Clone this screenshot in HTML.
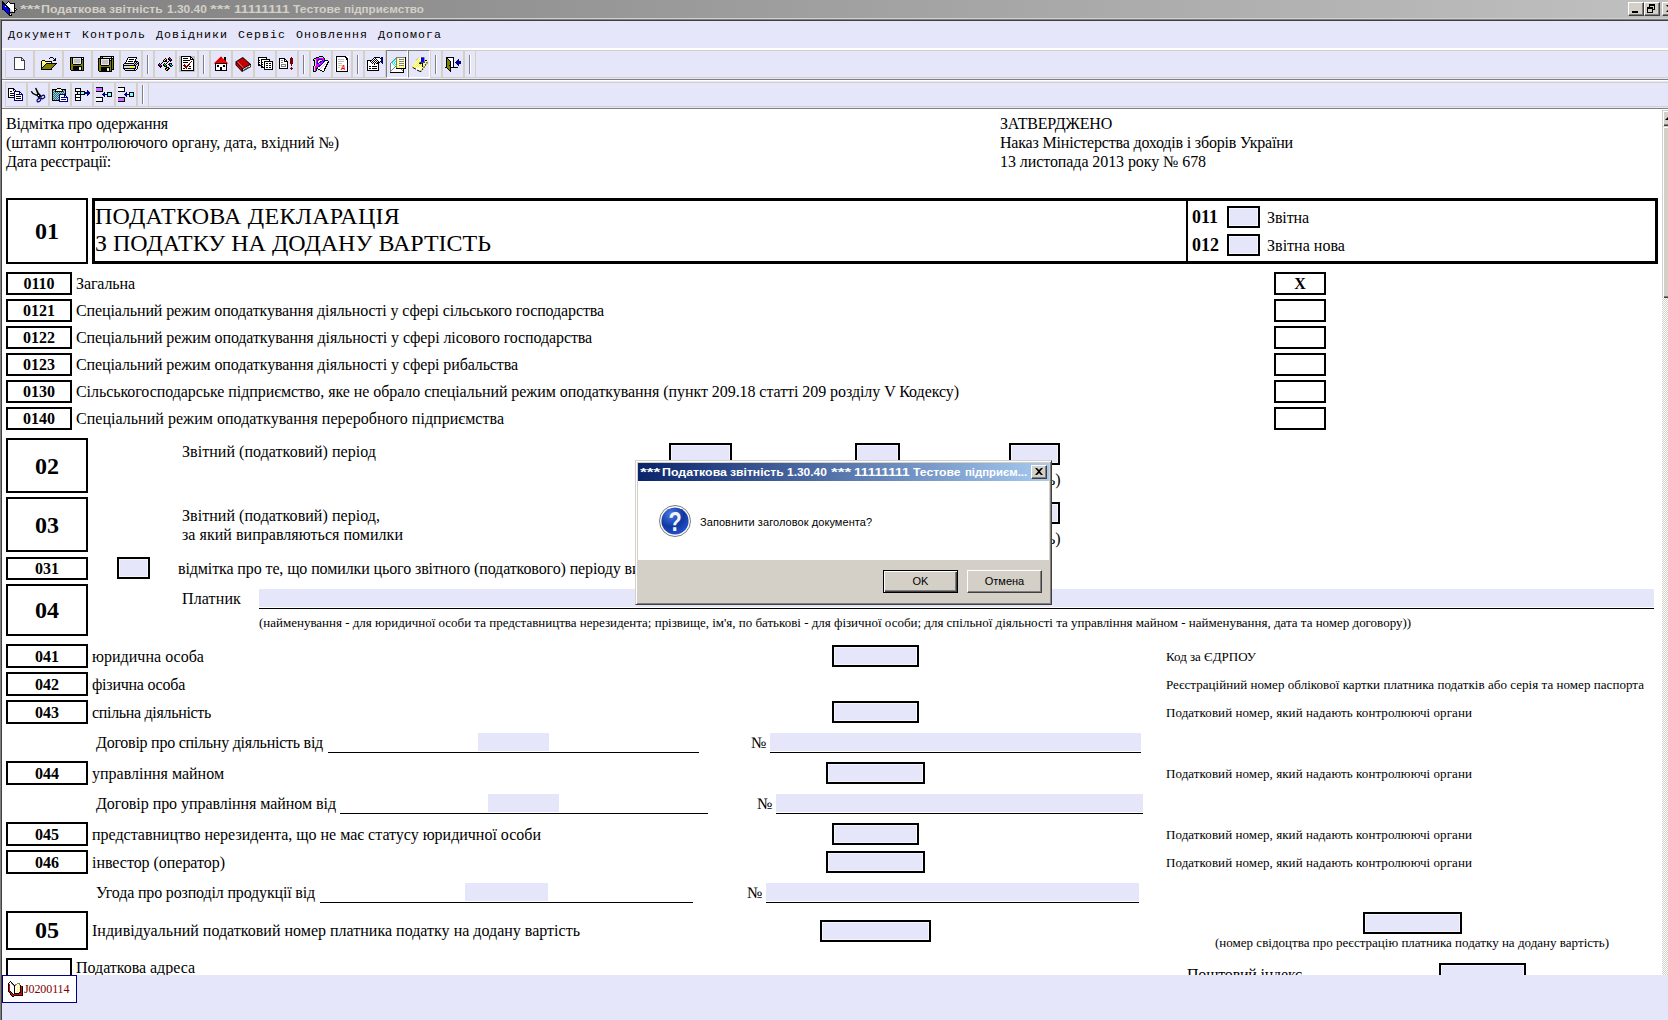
<!DOCTYPE html>
<html lang="uk"><head><meta charset="utf-8"><title>Податкова звітність</title>
<style>
html,body{margin:0;padding:0}
body{width:1668px;height:1020px;position:relative;overflow:hidden;background:#e6e6fa;font-family:"Liberation Sans",sans-serif}
#doc{position:absolute;left:0;top:0;width:1662px;height:975px;overflow:hidden;background:#fff}
#chrome{position:absolute;left:0;top:0;width:1668px;height:110px;background:#e6e6fa}
.abs{position:absolute}
</style></head><body>
<div id="doc">
<div style='position:absolute;left:6px;top:113.6px;font:400 16px/20px "Liberation Serif", serif;color:#000;white-space:pre;letter-spacing:-0.156px;'>Відмітка про одержання</div>
<div style='position:absolute;left:6px;top:132.6px;font:400 16px/20px "Liberation Serif", serif;color:#000;white-space:pre;letter-spacing:-0.04px;'>(штамп контролюючого органу, дата, вхідний №)</div>
<div style='position:absolute;left:6px;top:151.6px;font:400 16px/20px "Liberation Serif", serif;color:#000;white-space:pre;letter-spacing:-0.26px;'>Дата реєстрації:</div>
<div style='position:absolute;left:1000px;top:113.6px;font:400 16px/20px "Liberation Serif", serif;color:#000;white-space:pre;letter-spacing:-0.202px;'>ЗАТВЕРДЖЕНО</div>
<div style='position:absolute;left:1000px;top:132.6px;font:400 16px/20px "Liberation Serif", serif;color:#000;white-space:pre;letter-spacing:-0.189px;'>Наказ Міністерства доходів і зборів України</div>
<div style='position:absolute;left:1000px;top:151.6px;font:400 16px/20px "Liberation Serif", serif;color:#000;white-space:pre;letter-spacing:-0.077px;'>13 листопада 2013 року № 678</div>
<div style="position:absolute;left:6px;top:198px;width:82px;height:66px;box-sizing:border-box;border:2px solid #000;background:#fff;"></div>
<div style='position:absolute;left:6px;top:217.4px;font:700 24px/29px "Liberation Serif", serif;color:#000;white-space:pre;width:82px;text-align:center;'>01</div>
<div style="position:absolute;left:92px;top:198px;width:1566px;height:66px;box-sizing:border-box;border:3px solid #000;background:#fff;"></div>
<div style="position:absolute;left:1186px;top:200px;width:2px;height:62px;background:#000;"></div>
<div style='position:absolute;left:95px;top:202.4px;font:400 24px/29px "Liberation Serif", serif;color:#000;white-space:pre;letter-spacing:0.255px;'>ПОДАТКОВА ДЕКЛАРАЦІЯ</div>
<div style='position:absolute;left:95px;top:229.4px;font:400 24px/29px "Liberation Serif", serif;color:#000;white-space:pre;letter-spacing:-0.002px;'>З ПОДАТКУ НА ДОДАНУ ВАРТІСТЬ</div>
<div style='position:absolute;left:1192px;top:205.93px;font:700 18px/22px "Liberation Serif", serif;color:#000;white-space:pre;'>011</div>
<div style='position:absolute;left:1192px;top:233.93px;font:700 18px/22px "Liberation Serif", serif;color:#000;white-space:pre;'>012</div>
<div style="position:absolute;left:1227px;top:206px;width:33px;height:22px;box-sizing:border-box;border:2px solid #000;background:#e6e6fa;box-shadow:inset 0 0 0 1px #f4f4fd;"></div>
<div style="position:absolute;left:1227px;top:234px;width:33px;height:22px;box-sizing:border-box;border:2px solid #000;background:#e6e6fa;box-shadow:inset 0 0 0 1px #f4f4fd;"></div>
<div style='position:absolute;left:1267px;top:207.6px;font:400 16px/20px "Liberation Serif", serif;color:#000;white-space:pre;letter-spacing:-0.112px;'>Звітна</div>
<div style='position:absolute;left:1267px;top:235.6px;font:400 16px/20px "Liberation Serif", serif;color:#000;white-space:pre;letter-spacing:0.028px;'>Звітна нова</div>
<div style="position:absolute;left:6px;top:272px;width:66px;height:23px;box-sizing:border-box;border:2px solid #000;background:#fff;"></div>
<div style='position:absolute;left:6px;top:273.6px;font:700 16px/20px "Liberation Serif", serif;color:#000;white-space:pre;width:66px;text-align:center;'>0110</div>
<div style='position:absolute;left:76px;top:273.6px;font:400 16px/20px "Liberation Serif", serif;color:#000;white-space:pre;letter-spacing:-0.109px;'>Загальна</div>
<div style="position:absolute;left:1274px;top:272px;width:52px;height:23px;box-sizing:border-box;border:2px solid #000;background:#fff;"></div>
<div style="position:absolute;left:6px;top:299px;width:66px;height:23px;box-sizing:border-box;border:2px solid #000;background:#fff;"></div>
<div style='position:absolute;left:6px;top:300.6px;font:700 16px/20px "Liberation Serif", serif;color:#000;white-space:pre;width:66px;text-align:center;'>0121</div>
<div style='position:absolute;left:76px;top:300.6px;font:400 16px/20px "Liberation Serif", serif;color:#000;white-space:pre;letter-spacing:-0.117px;'>Спеціальний режим оподаткування діяльності у сфері сільського господарства</div>
<div style="position:absolute;left:1274px;top:299px;width:52px;height:23px;box-sizing:border-box;border:2px solid #000;background:#fff;"></div>
<div style="position:absolute;left:6px;top:326px;width:66px;height:23px;box-sizing:border-box;border:2px solid #000;background:#fff;"></div>
<div style='position:absolute;left:6px;top:327.6px;font:700 16px/20px "Liberation Serif", serif;color:#000;white-space:pre;width:66px;text-align:center;'>0122</div>
<div style='position:absolute;left:76px;top:327.6px;font:400 16px/20px "Liberation Serif", serif;color:#000;white-space:pre;letter-spacing:-0.103px;'>Спеціальний режим оподаткування діяльності у сфері лісового господарства</div>
<div style="position:absolute;left:1274px;top:326px;width:52px;height:23px;box-sizing:border-box;border:2px solid #000;background:#fff;"></div>
<div style="position:absolute;left:6px;top:353px;width:66px;height:23px;box-sizing:border-box;border:2px solid #000;background:#fff;"></div>
<div style='position:absolute;left:6px;top:354.6px;font:700 16px/20px "Liberation Serif", serif;color:#000;white-space:pre;width:66px;text-align:center;'>0123</div>
<div style='position:absolute;left:76px;top:354.6px;font:400 16px/20px "Liberation Serif", serif;color:#000;white-space:pre;letter-spacing:-0.107px;'>Спеціальний режим оподаткування діяльності у сфері рибальства</div>
<div style="position:absolute;left:1274px;top:353px;width:52px;height:23px;box-sizing:border-box;border:2px solid #000;background:#fff;"></div>
<div style="position:absolute;left:6px;top:380px;width:66px;height:23px;box-sizing:border-box;border:2px solid #000;background:#fff;"></div>
<div style='position:absolute;left:6px;top:381.6px;font:700 16px/20px "Liberation Serif", serif;color:#000;white-space:pre;width:66px;text-align:center;'>0130</div>
<div style='position:absolute;left:76px;top:381.6px;font:400 16px/20px "Liberation Serif", serif;color:#000;white-space:pre;letter-spacing:-0.065px;'>Сільськогосподарське підприємство, яке не обрало спеціальний режим оподаткування (пункт 209.18 статті 209 розділу V Кодексу)</div>
<div style="position:absolute;left:1274px;top:380px;width:52px;height:23px;box-sizing:border-box;border:2px solid #000;background:#fff;"></div>
<div style="position:absolute;left:6px;top:407px;width:66px;height:23px;box-sizing:border-box;border:2px solid #000;background:#fff;"></div>
<div style='position:absolute;left:6px;top:408.6px;font:700 16px/20px "Liberation Serif", serif;color:#000;white-space:pre;width:66px;text-align:center;'>0140</div>
<div style='position:absolute;left:76px;top:408.6px;font:400 16px/20px "Liberation Serif", serif;color:#000;white-space:pre;letter-spacing:0.032px;'>Спеціальний режим оподаткування переробного підприємства</div>
<div style="position:absolute;left:1274px;top:407px;width:52px;height:23px;box-sizing:border-box;border:2px solid #000;background:#fff;"></div>
<div style='position:absolute;left:1274px;top:273.6px;font:700 16px/20px "Liberation Serif", serif;color:#000;white-space:pre;width:52px;text-align:center;'>X</div>
<div style="position:absolute;left:6px;top:438px;width:82px;height:55px;box-sizing:border-box;border:2px solid #000;background:#fff;"></div>
<div style='position:absolute;left:6px;top:452.4px;font:700 24px/29px "Liberation Serif", serif;color:#000;white-space:pre;width:82px;text-align:center;'>02</div>
<div style='position:absolute;left:182px;top:441.6px;font:400 16px/20px "Liberation Serif", serif;color:#000;white-space:pre;letter-spacing:0.048px;'>Звітний (податковий) період</div>
<div style="position:absolute;left:669px;top:443px;width:63px;height:22px;box-sizing:border-box;border:2px solid #000;background:#e6e6fa;box-shadow:inset 0 0 0 1px #f4f4fd;"></div>
<div style="position:absolute;left:855px;top:443px;width:45px;height:22px;box-sizing:border-box;border:2px solid #000;background:#e6e6fa;box-shadow:inset 0 0 0 1px #f4f4fd;"></div>
<div style="position:absolute;left:1009px;top:443px;width:51px;height:22px;box-sizing:border-box;border:2px solid #000;background:#e6e6fa;box-shadow:inset 0 0 0 1px #f4f4fd;"></div>
<div style='position:absolute;left:1048px;top:469.6px;font:400 16px/20px "Liberation Serif", serif;color:#000;white-space:pre;'>ь)</div>
<div style="position:absolute;left:6px;top:497px;width:82px;height:55px;box-sizing:border-box;border:2px solid #000;background:#fff;"></div>
<div style='position:absolute;left:6px;top:511.4px;font:700 24px/29px "Liberation Serif", serif;color:#000;white-space:pre;width:82px;text-align:center;'>03</div>
<div style='position:absolute;left:182px;top:505.6px;font:400 16px/20px "Liberation Serif", serif;color:#000;white-space:pre;letter-spacing:0.046px;'>Звітний (податковий) період,</div>
<div style='position:absolute;left:182px;top:524.6px;font:400 16px/20px "Liberation Serif", serif;color:#000;white-space:pre;letter-spacing:0.038px;'>за який виправляються помилки</div>
<div style="position:absolute;left:1030px;top:502px;width:30px;height:22px;box-sizing:border-box;border:2px solid #000;background:#e6e6fa;box-shadow:inset 0 0 0 1px #f4f4fd;"></div>
<div style='position:absolute;left:1048px;top:528.6px;font:400 16px/20px "Liberation Serif", serif;color:#000;white-space:pre;'>ь)</div>
<div style="position:absolute;left:6px;top:557px;width:82px;height:23px;box-sizing:border-box;border:2px solid #000;background:#fff;"></div>
<div style='position:absolute;left:6px;top:558.6px;font:700 16px/20px "Liberation Serif", serif;color:#000;white-space:pre;width:82px;text-align:center;'>031</div>
<div style="position:absolute;left:117px;top:557px;width:33px;height:22px;box-sizing:border-box;border:2px solid #000;background:#e6e6fa;box-shadow:inset 0 0 0 1px #f4f4fd;"></div>
<div style='position:absolute;left:178px;top:558.6px;font:400 16px/20px "Liberation Serif", serif;color:#000;white-space:pre;letter-spacing:-0.108px;'>відмітка про те, що помилки цього звітного (податкового) періоду виправлено</div>
<div style="position:absolute;left:6px;top:584px;width:82px;height:52px;box-sizing:border-box;border:2px solid #000;background:#fff;"></div>
<div style='position:absolute;left:6px;top:596.4px;font:700 24px/29px "Liberation Serif", serif;color:#000;white-space:pre;width:82px;text-align:center;'>04</div>
<div style='position:absolute;left:182px;top:588.6px;font:400 16px/20px "Liberation Serif", serif;color:#000;white-space:pre;letter-spacing:0.125px;'>Платник</div>
<div style="position:absolute;left:259px;top:589px;width:1395px;height:18px;background:#e6e6fa;"></div>
<div style="position:absolute;left:259px;top:608px;width:1395px;height:1px;background:#000;"></div>
<div style='position:absolute;left:259px;top:614.61px;font:400 13px/16px "Liberation Serif", serif;color:#000;white-space:pre;letter-spacing:-0.011px;'>(найменування - для юридичної особи та представництва нерезидента; прізвище, ім'я, по батькові - для фізичної особи; для спільної діяльності та управління майном - найменування, дата та номер договору))</div>
<div style="position:absolute;left:6px;top:644px;width:82px;height:24px;box-sizing:border-box;border:2px solid #000;background:#fff;"></div>
<div style='position:absolute;left:6px;top:646.6px;font:700 16px/20px "Liberation Serif", serif;color:#000;white-space:pre;width:82px;text-align:center;'>041</div>
<div style='position:absolute;left:92px;top:646.6px;font:400 16px/20px "Liberation Serif", serif;color:#000;white-space:pre;letter-spacing:0.023px;'>юридична особа</div>
<div style="position:absolute;left:832px;top:645px;width:87px;height:22px;box-sizing:border-box;border:2px solid #000;background:#e6e6fa;box-shadow:inset 0 0 0 1px #f4f4fd;"></div>
<div style='position:absolute;left:1166px;top:648.61px;font:400 13px/16px "Liberation Serif", serif;color:#000;white-space:pre;letter-spacing:-0.008px;'>Код за ЄДРПОУ</div>
<div style="position:absolute;left:6px;top:672px;width:82px;height:24px;box-sizing:border-box;border:2px solid #000;background:#fff;"></div>
<div style='position:absolute;left:6px;top:674.6px;font:700 16px/20px "Liberation Serif", serif;color:#000;white-space:pre;width:82px;text-align:center;'>042</div>
<div style='position:absolute;left:92px;top:674.6px;font:400 16px/20px "Liberation Serif", serif;color:#000;white-space:pre;letter-spacing:-0.243px;'>фізична особа</div>
<div style='position:absolute;left:1166px;top:676.61px;font:400 13px/16px "Liberation Serif", serif;color:#000;white-space:pre;letter-spacing:0.044px;'>Реєстраційний номер облікової картки платника податків або серія та номер паспорта</div>
<div style="position:absolute;left:6px;top:700px;width:82px;height:24px;box-sizing:border-box;border:2px solid #000;background:#fff;"></div>
<div style='position:absolute;left:6px;top:702.6px;font:700 16px/20px "Liberation Serif", serif;color:#000;white-space:pre;width:82px;text-align:center;'>043</div>
<div style='position:absolute;left:92px;top:702.6px;font:400 16px/20px "Liberation Serif", serif;color:#000;white-space:pre;letter-spacing:-0.316px;'>спільна діяльність</div>
<div style="position:absolute;left:832px;top:701px;width:87px;height:22px;box-sizing:border-box;border:2px solid #000;background:#e6e6fa;box-shadow:inset 0 0 0 1px #f4f4fd;"></div>
<div style='position:absolute;left:1166px;top:704.61px;font:400 13px/16px "Liberation Serif", serif;color:#000;white-space:pre;letter-spacing:0.071px;'>Податковий номер, який надають контролюючі органи</div>
<div style="position:absolute;left:6px;top:761px;width:82px;height:24px;box-sizing:border-box;border:2px solid #000;background:#fff;"></div>
<div style='position:absolute;left:6px;top:763.6px;font:700 16px/20px "Liberation Serif", serif;color:#000;white-space:pre;width:82px;text-align:center;'>044</div>
<div style='position:absolute;left:92px;top:763.6px;font:400 16px/20px "Liberation Serif", serif;color:#000;white-space:pre;letter-spacing:0.001px;'>управління майном</div>
<div style="position:absolute;left:826px;top:762px;width:99px;height:22px;box-sizing:border-box;border:2px solid #000;background:#e6e6fa;box-shadow:inset 0 0 0 1px #f4f4fd;"></div>
<div style='position:absolute;left:1166px;top:765.61px;font:400 13px/16px "Liberation Serif", serif;color:#000;white-space:pre;letter-spacing:0.071px;'>Податковий номер, який надають контролюючі органи</div>
<div style="position:absolute;left:6px;top:822px;width:82px;height:24px;box-sizing:border-box;border:2px solid #000;background:#fff;"></div>
<div style='position:absolute;left:6px;top:824.6px;font:700 16px/20px "Liberation Serif", serif;color:#000;white-space:pre;width:82px;text-align:center;'>045</div>
<div style='position:absolute;left:92px;top:824.6px;font:400 16px/20px "Liberation Serif", serif;color:#000;white-space:pre;letter-spacing:-0.012px;'>представництво нерезидента, що не має статусу юридичної особи</div>
<div style="position:absolute;left:832px;top:823px;width:87px;height:22px;box-sizing:border-box;border:2px solid #000;background:#e6e6fa;box-shadow:inset 0 0 0 1px #f4f4fd;"></div>
<div style='position:absolute;left:1166px;top:826.61px;font:400 13px/16px "Liberation Serif", serif;color:#000;white-space:pre;letter-spacing:0.071px;'>Податковий номер, який надають контролюючі органи</div>
<div style="position:absolute;left:6px;top:850px;width:82px;height:24px;box-sizing:border-box;border:2px solid #000;background:#fff;"></div>
<div style='position:absolute;left:6px;top:852.6px;font:700 16px/20px "Liberation Serif", serif;color:#000;white-space:pre;width:82px;text-align:center;'>046</div>
<div style='position:absolute;left:92px;top:852.6px;font:400 16px/20px "Liberation Serif", serif;color:#000;white-space:pre;letter-spacing:-0.034px;'>інвестор (оператор)</div>
<div style="position:absolute;left:826px;top:851px;width:99px;height:22px;box-sizing:border-box;border:2px solid #000;background:#e6e6fa;box-shadow:inset 0 0 0 1px #f4f4fd;"></div>
<div style='position:absolute;left:1166px;top:854.61px;font:400 13px/16px "Liberation Serif", serif;color:#000;white-space:pre;letter-spacing:0.071px;'>Податковий номер, який надають контролюючі органи</div>
<div style='position:absolute;left:96px;top:732.6px;font:400 16px/20px "Liberation Serif", serif;color:#000;white-space:pre;letter-spacing:-0.246px;'>Договір про спільну діяльність від</div>
<div style="position:absolute;left:328px;top:752px;width:371px;height:1px;background:#000;"></div>
<div style="position:absolute;left:478px;top:733px;width:71px;height:18px;background:#e6e6fa;"></div>
<div style='position:absolute;left:751px;top:732.6px;font:400 16px/20px "Liberation Serif", serif;color:#000;white-space:pre;'>№</div>
<div style="position:absolute;left:770px;top:733px;width:371px;height:18px;background:#e6e6fa;"></div>
<div style="position:absolute;left:770px;top:752px;width:371px;height:1px;background:#000;"></div>
<div style='position:absolute;left:96px;top:793.6px;font:400 16px/20px "Liberation Serif", serif;color:#000;white-space:pre;letter-spacing:-0.054px;'>Договір про управління майном від</div>
<div style="position:absolute;left:340px;top:813px;width:368px;height:1px;background:#000;"></div>
<div style="position:absolute;left:488px;top:794px;width:71px;height:18px;background:#e6e6fa;"></div>
<div style='position:absolute;left:757px;top:793.6px;font:400 16px/20px "Liberation Serif", serif;color:#000;white-space:pre;'>№</div>
<div style="position:absolute;left:776px;top:794px;width:367px;height:18px;background:#e6e6fa;"></div>
<div style="position:absolute;left:776px;top:813px;width:367px;height:1px;background:#000;"></div>
<div style='position:absolute;left:96px;top:882.6px;font:400 16px/20px "Liberation Serif", serif;color:#000;white-space:pre;letter-spacing:-0.157px;'>Угода про розподіл продукції від</div>
<div style="position:absolute;left:320px;top:902px;width:373px;height:1px;background:#000;"></div>
<div style="position:absolute;left:465px;top:883px;width:83px;height:18px;background:#e6e6fa;"></div>
<div style='position:absolute;left:747px;top:882.6px;font:400 16px/20px "Liberation Serif", serif;color:#000;white-space:pre;'>№</div>
<div style="position:absolute;left:766px;top:883px;width:373px;height:18px;background:#e6e6fa;"></div>
<div style="position:absolute;left:766px;top:902px;width:373px;height:1px;background:#000;"></div>
<div style="position:absolute;left:6px;top:911px;width:82px;height:39px;box-sizing:border-box;border:2px solid #000;background:#fff;"></div>
<div style='position:absolute;left:6px;top:916.4px;font:700 24px/29px "Liberation Serif", serif;color:#000;white-space:pre;width:82px;text-align:center;'>05</div>
<div style='position:absolute;left:92px;top:920.6px;font:400 16px/20px "Liberation Serif", serif;color:#000;white-space:pre;letter-spacing:0.008px;'>Індивідуальний податковий номер платника податку на додану вартість</div>
<div style="position:absolute;left:820px;top:920px;width:111px;height:22px;box-sizing:border-box;border:2px solid #000;background:#e6e6fa;box-shadow:inset 0 0 0 1px #f4f4fd;"></div>
<div style="position:absolute;left:1363px;top:912px;width:99px;height:22px;box-sizing:border-box;border:2px solid #000;background:#e6e6fa;box-shadow:inset 0 0 0 1px #f4f4fd;"></div>
<div style='position:absolute;left:1215px;top:934.61px;font:400 13px/16px "Liberation Serif", serif;color:#000;white-space:pre;letter-spacing:0.012px;'>(номер свідоцтва про реєстрацію платника податку на додану вартість)</div>
<div style="position:absolute;left:6px;top:958px;width:66px;height:32px;box-sizing:border-box;border:2px solid #000;background:#fff;"></div>
<div style='position:absolute;left:76px;top:957.6px;font:400 16px/20px "Liberation Serif", serif;color:#000;white-space:pre;letter-spacing:-0.029px;'>Податкова адреса</div>
<div style='position:absolute;left:1187px;top:964.6px;font:400 16px/20px "Liberation Serif", serif;color:#000;white-space:pre;letter-spacing:-0.204px;'>Поштовий індекс</div>
<div style="position:absolute;left:1439px;top:963px;width:87px;height:27px;box-sizing:border-box;border:2px solid #000;background:#e6e6fa;box-shadow:inset 0 0 0 1px #f4f4fd;"></div>
</div>
<div id="chrome">
<div style="position:absolute;left:0px;top:0px;width:1668px;height:18px;background:linear-gradient(to right,#808080,#c0c0c0);"></div>
<div style="position:absolute;left:2px;top:1px;width:16px;height:16px"><svg width="16" height="16" viewBox="0 0 16 16" shape-rendering="crispEdges" style="display:block;overflow:visible"><rect x="0" y="0" width="1" height="1" fill="#000"/><rect x="6" y="0" width="1" height="1" fill="#000"/><rect x="0" y="1" width="2" height="1" fill="#000"/><rect x="5" y="1" width="1" height="1" fill="#000"/><rect x="6" y="1" width="1" height="1" fill="#fff"/><rect x="7" y="1" width="1" height="1" fill="#000"/><rect x="0" y="2" width="3" height="1" fill="#000"/><rect x="4" y="2" width="1" height="1" fill="#000"/><rect x="5" y="2" width="3" height="1" fill="#fff"/><rect x="8" y="2" width="5" height="1" fill="#000"/><rect x="0" y="3" width="1" height="1" fill="#000"/><rect x="1" y="3" width="1" height="1" fill="#0000ff"/><rect x="2" y="3" width="2" height="1" fill="#000"/><rect x="4" y="3" width="8" height="1" fill="#fff"/><rect x="12" y="3" width="1" height="1" fill="#000"/><rect x="0" y="4" width="1" height="1" fill="#000"/><rect x="1" y="4" width="2" height="1" fill="#0000ff"/><rect x="3" y="4" width="2" height="1" fill="#000"/><rect x="5" y="4" width="7" height="1" fill="#fff"/><rect x="12" y="4" width="1" height="1" fill="#000"/><rect x="0" y="5" width="1" height="1" fill="#000"/><rect x="1" y="5" width="2" height="1" fill="#0000ff"/><rect x="3" y="5" width="1" height="1" fill="#fff"/><rect x="4" y="5" width="2" height="1" fill="#000"/><rect x="6" y="5" width="6" height="1" fill="#fff"/><rect x="12" y="5" width="1" height="1" fill="#000"/><rect x="0" y="6" width="1" height="1" fill="#000"/><rect x="1" y="6" width="4" height="1" fill="#0000ff"/><rect x="5" y="6" width="2" height="1" fill="#000"/><rect x="7" y="6" width="5" height="1" fill="#fff"/><rect x="12" y="6" width="1" height="1" fill="#000"/><rect x="0" y="7" width="1" height="1" fill="#000"/><rect x="1" y="7" width="5" height="1" fill="#0000ff"/><rect x="6" y="7" width="2" height="1" fill="#000"/><rect x="8" y="7" width="4" height="1" fill="#fff"/><rect x="12" y="7" width="2" height="1" fill="#000"/><rect x="0" y="8" width="2" height="1" fill="#000"/><rect x="2" y="8" width="5" height="1" fill="#0000ff"/><rect x="7" y="8" width="1" height="1" fill="#000"/><rect x="8" y="8" width="1" height="1" fill="#c0c0c0"/><rect x="9" y="8" width="3" height="1" fill="#fff"/><rect x="12" y="8" width="1" height="1" fill="#000"/><rect x="13" y="8" width="1" height="1" fill="#fff"/><rect x="14" y="8" width="1" height="1" fill="#000"/><rect x="2" y="9" width="1" height="1" fill="#000"/><rect x="3" y="9" width="4" height="1" fill="#0000ff"/><rect x="7" y="9" width="1" height="1" fill="#000"/><rect x="8" y="9" width="2" height="1" fill="#c0c0c0"/><rect x="10" y="9" width="2" height="1" fill="#fff"/><rect x="12" y="9" width="2" height="1" fill="#000"/><rect x="3" y="10" width="1" height="1" fill="#000"/><rect x="4" y="10" width="3" height="1" fill="#0000ff"/><rect x="7" y="10" width="1" height="1" fill="#000"/><rect x="8" y="10" width="3" height="1" fill="#c0c0c0"/><rect x="11" y="10" width="1" height="1" fill="#fff"/><rect x="12" y="10" width="1" height="1" fill="#000"/><rect x="4" y="11" width="1" height="1" fill="#000"/><rect x="5" y="11" width="2" height="1" fill="#0000ff"/><rect x="7" y="11" width="6" height="1" fill="#000"/><rect x="5" y="12" width="1" height="1" fill="#000"/><rect x="6" y="12" width="1" height="1" fill="#0000ff"/><rect x="7" y="12" width="1" height="1" fill="#000"/><rect x="6" y="13" width="2" height="1" fill="#000"/><rect x="8" y="13" width="1" height="1" fill="#fff"/><rect x="9" y="13" width="1" height="1" fill="#000"/><rect x="7" y="14" width="3" height="1" fill="#000"/></svg></div>
<div style='position:absolute;left:20.0px;top:2.19px;font:700 11px/14px "Liberation Sans", sans-serif;color:#d4d0c8;white-space:pre;transform:scaleX(1.5805);transform-origin:0 0;'>***</div>
<div style='position:absolute;left:41.4px;top:2.19px;font:700 11px/14px "Liberation Sans", sans-serif;color:#d4d0c8;white-space:pre;transform:scaleX(1.1246);transform-origin:0 0;'>Податкова</div>
<div style='position:absolute;left:109.4px;top:2.19px;font:700 11px/14px "Liberation Sans", sans-serif;color:#d4d0c8;white-space:pre;transform:scaleX(1.104);transform-origin:0 0;'>звітність</div>
<div style='position:absolute;left:166.6px;top:2.19px;font:700 11px/14px "Liberation Sans", sans-serif;color:#d4d0c8;white-space:pre;transform:scaleX(1.0844);transform-origin:0 0;'>1.30.40</div>
<div style='position:absolute;left:210.4px;top:2.19px;font:700 11px/14px "Liberation Sans", sans-serif;color:#d4d0c8;white-space:pre;transform:scaleX(1.5727);transform-origin:0 0;'>***</div>
<div style='position:absolute;left:234.1px;top:2.19px;font:700 11px/14px "Liberation Sans", sans-serif;color:#d4d0c8;white-space:pre;transform:scaleX(1.2415);transform-origin:0 0;'>11111111</div>
<div style='position:absolute;left:293.1px;top:2.19px;font:700 11px/14px "Liberation Sans", sans-serif;color:#d4d0c8;white-space:pre;transform:scaleX(1.1078);transform-origin:0 0;'>Тестове</div>
<div style='position:absolute;left:344.2px;top:2.19px;font:700 11px/14px "Liberation Sans", sans-serif;color:#d4d0c8;white-space:pre;transform:scaleX(1.0552);transform-origin:0 0;'>підприємство</div>
<div style="position:absolute;left:1628px;top:2px;width:16px;height:14px;box-sizing:border-box;background:#d4d0c8;border:1px solid;border-color:#fff #404040 #404040 #fff;box-shadow:inset -1px -1px 0 #808080"><div style="position:absolute;left:3px;top:8px;width:6px;height:2px;background:#000"></div></div>
<div style="position:absolute;left:1644px;top:2px;width:16px;height:14px;box-sizing:border-box;background:#d4d0c8;border:1px solid;border-color:#fff #404040 #404040 #fff;box-shadow:inset -1px -1px 0 #808080"><div style="position:absolute;left:4px;top:1px;width:6px;height:6px;box-sizing:border-box;border:1px solid #000;border-top-width:2px"></div><div style="position:absolute;left:2px;top:4px;width:6px;height:6px;box-sizing:border-box;border:1px solid #000;border-top-width:2px;background:#d4d0c8"></div></div>
<div style="position:absolute;left:1662px;top:2px;width:16px;height:14px;box-sizing:border-box;background:#d4d0c8;border:1px solid;border-color:#fff #404040 #404040 #fff;box-shadow:inset -1px -1px 0 #808080"><svg style="position:absolute;left:3px;top:2px" width="8" height="7" viewBox="0 0 8 7"><path d="M0 0h2l2 2 2-2h2L5 3.5 8 7H6L4 5 2 7H0l3-3.5z" fill="#000"/></svg></div>
<div style="position:absolute;left:0px;top:18px;width:1668px;height:1px;background:#d4d0c8;"></div>
<div style="position:absolute;left:0px;top:19px;width:1668px;height:1px;background:#808080;"></div>
<div style="position:absolute;left:0px;top:20px;width:1668px;height:1px;background:#404040;"></div>
<div style='position:absolute;left:8px;top:27px;font:400 11.6px/16px "Liberation Mono",monospace;color:#000;white-space:pre;letter-spacing:1.04px'>Документ</div>
<div style='position:absolute;left:82px;top:27px;font:400 11.6px/16px "Liberation Mono",monospace;color:#000;white-space:pre;letter-spacing:1.04px'>Контроль</div>
<div style='position:absolute;left:156px;top:27px;font:400 11.6px/16px "Liberation Mono",monospace;color:#000;white-space:pre;letter-spacing:1.04px'>Довідники</div>
<div style='position:absolute;left:238px;top:27px;font:400 11.6px/16px "Liberation Mono",monospace;color:#000;white-space:pre;letter-spacing:1.04px'>Сервіс</div>
<div style='position:absolute;left:296px;top:27px;font:400 11.6px/16px "Liberation Mono",monospace;color:#000;white-space:pre;letter-spacing:1.04px'>Оновлення</div>
<div style='position:absolute;left:378px;top:27px;font:400 11.6px/16px "Liberation Mono",monospace;color:#000;white-space:pre;letter-spacing:1.04px'>Допомога</div>
<div style="position:absolute;left:2px;top:48px;width:1666px;height:2px;background:#fff;"></div>
<div style="position:absolute;left:5px;top:50px;width:1663px;height:1px;background:#d4d0c8;"></div>
<div style="position:absolute;left:5px;top:77px;width:1663px;height:1px;background:#d4d0c8;"></div>
<div style="position:absolute;left:2px;top:79px;width:1666px;height:1px;background:#808080;"></div>
<div style="position:absolute;left:2px;top:80px;width:1666px;height:1px;background:#fff;"></div>
<div style="position:absolute;left:5px;top:50px;width:29px;height:28px;box-sizing:border-box;border:1px solid #d4d0c8;"><div style="position:absolute;left:5px;top:5px;width:16px;height:16px"><svg width="16" height="16" viewBox="0 0 16 16" shape-rendering="crispEdges" style="display:block;overflow:visible"><rect x="3" y="1" width="8" height="1" fill="#404040"/><rect x="3" y="2" width="1" height="1" fill="#404040"/><rect x="4" y="2" width="6" height="1" fill="#fff"/><rect x="10" y="2" width="2" height="1" fill="#404040"/><rect x="3" y="3" width="1" height="1" fill="#404040"/><rect x="4" y="3" width="6" height="1" fill="#fff"/><rect x="10" y="3" width="1" height="1" fill="#404040"/><rect x="11" y="3" width="1" height="1" fill="#fff"/><rect x="12" y="3" width="1" height="1" fill="#404040"/><rect x="3" y="4" width="1" height="1" fill="#404040"/><rect x="4" y="4" width="6" height="1" fill="#fff"/><rect x="10" y="4" width="4" height="1" fill="#404040"/><rect x="3" y="5" width="1" height="1" fill="#404040"/><rect x="4" y="5" width="9" height="1" fill="#fff"/><rect x="13" y="5" width="1" height="1" fill="#404040"/><rect x="3" y="6" width="1" height="1" fill="#404040"/><rect x="4" y="6" width="9" height="1" fill="#fff"/><rect x="13" y="6" width="1" height="1" fill="#404040"/><rect x="3" y="7" width="1" height="1" fill="#404040"/><rect x="4" y="7" width="9" height="1" fill="#fff"/><rect x="13" y="7" width="1" height="1" fill="#404040"/><rect x="3" y="8" width="1" height="1" fill="#404040"/><rect x="4" y="8" width="9" height="1" fill="#fff"/><rect x="13" y="8" width="1" height="1" fill="#404040"/><rect x="3" y="9" width="1" height="1" fill="#404040"/><rect x="4" y="9" width="9" height="1" fill="#fff"/><rect x="13" y="9" width="1" height="1" fill="#404040"/><rect x="3" y="10" width="1" height="1" fill="#404040"/><rect x="4" y="10" width="9" height="1" fill="#fff"/><rect x="13" y="10" width="1" height="1" fill="#404040"/><rect x="3" y="11" width="1" height="1" fill="#404040"/><rect x="4" y="11" width="9" height="1" fill="#fff"/><rect x="13" y="11" width="1" height="1" fill="#404040"/><rect x="3" y="12" width="1" height="1" fill="#404040"/><rect x="4" y="12" width="9" height="1" fill="#fff"/><rect x="13" y="12" width="1" height="1" fill="#404040"/><rect x="3" y="13" width="11" height="1" fill="#404040"/></svg></div></div>
<div style="position:absolute;left:34px;top:50px;width:29px;height:28px;box-sizing:border-box;border:1px solid #d4d0c8;"><div style="position:absolute;left:5px;top:5px;width:16px;height:16px"><svg width="17" height="16" viewBox="0 0 17 16" shape-rendering="crispEdges" style="display:block;overflow:visible"><rect x="10" y="1" width="3" height="1" fill="#000"/><rect x="9" y="2" width="1" height="1" fill="#000"/><rect x="13" y="2" width="1" height="1" fill="#000"/><rect x="15" y="2" width="1" height="1" fill="#000"/><rect x="14" y="3" width="2" height="1" fill="#000"/><rect x="2" y="4" width="3" height="1" fill="#000"/><rect x="13" y="4" width="3" height="1" fill="#000"/><rect x="1" y="5" width="1" height="1" fill="#000"/><rect x="2" y="5" width="1" height="1" fill="#ffff00"/><rect x="3" y="5" width="1" height="1" fill="#fff"/><rect x="4" y="5" width="1" height="1" fill="#ffff00"/><rect x="5" y="5" width="7" height="1" fill="#000"/><rect x="1" y="6" width="1" height="1" fill="#000"/><rect x="2" y="6" width="1" height="1" fill="#fff"/><rect x="3" y="6" width="1" height="1" fill="#ffff00"/><rect x="4" y="6" width="1" height="1" fill="#fff"/><rect x="5" y="6" width="1" height="1" fill="#ffff00"/><rect x="6" y="6" width="1" height="1" fill="#fff"/><rect x="7" y="6" width="1" height="1" fill="#ffff00"/><rect x="8" y="6" width="1" height="1" fill="#fff"/><rect x="9" y="6" width="1" height="1" fill="#ffff00"/><rect x="10" y="6" width="1" height="1" fill="#fff"/><rect x="11" y="6" width="1" height="1" fill="#000"/><rect x="1" y="7" width="1" height="1" fill="#000"/><rect x="2" y="7" width="1" height="1" fill="#ffff00"/><rect x="3" y="7" width="1" height="1" fill="#fff"/><rect x="4" y="7" width="1" height="1" fill="#ffff00"/><rect x="5" y="7" width="1" height="1" fill="#fff"/><rect x="6" y="7" width="11" height="1" fill="#000"/><rect x="1" y="8" width="1" height="1" fill="#000"/><rect x="2" y="8" width="1" height="1" fill="#fff"/><rect x="3" y="8" width="1" height="1" fill="#ffff00"/><rect x="4" y="8" width="1" height="1" fill="#fff"/><rect x="5" y="8" width="1" height="1" fill="#000"/><rect x="6" y="8" width="9" height="1" fill="#808000"/><rect x="15" y="8" width="1" height="1" fill="#000"/><rect x="1" y="9" width="1" height="1" fill="#000"/><rect x="2" y="9" width="1" height="1" fill="#ffff00"/><rect x="3" y="9" width="1" height="1" fill="#fff"/><rect x="4" y="9" width="1" height="1" fill="#000"/><rect x="5" y="9" width="9" height="1" fill="#808000"/><rect x="14" y="9" width="1" height="1" fill="#000"/><rect x="1" y="10" width="1" height="1" fill="#000"/><rect x="2" y="10" width="1" height="1" fill="#fff"/><rect x="3" y="10" width="1" height="1" fill="#000"/><rect x="4" y="10" width="9" height="1" fill="#808000"/><rect x="13" y="10" width="1" height="1" fill="#000"/><rect x="1" y="11" width="2" height="1" fill="#000"/><rect x="3" y="11" width="9" height="1" fill="#808000"/><rect x="12" y="11" width="1" height="1" fill="#000"/><rect x="1" y="12" width="1" height="1" fill="#000"/><rect x="2" y="12" width="9" height="1" fill="#808000"/><rect x="11" y="12" width="1" height="1" fill="#000"/><rect x="1" y="13" width="11" height="1" fill="#000"/></svg></div></div>
<div style="position:absolute;left:63px;top:50px;width:29px;height:28px;box-sizing:border-box;border:1px solid #d4d0c8;"><div style="position:absolute;left:5px;top:5px;width:16px;height:16px"><svg width="16" height="16" viewBox="0 0 16 16" shape-rendering="crispEdges" style="display:block;overflow:visible"><rect x="1" y="1" width="14" height="1" fill="#000"/><rect x="1" y="2" width="1" height="1" fill="#000"/><rect x="2" y="2" width="1" height="1" fill="#808000"/><rect x="3" y="2" width="1" height="1" fill="#000"/><rect x="4" y="2" width="8" height="1" fill="#e8e8e8"/><rect x="12" y="2" width="1" height="1" fill="#000"/><rect x="13" y="2" width="1" height="1" fill="#fff"/><rect x="14" y="2" width="1" height="1" fill="#000"/><rect x="1" y="3" width="1" height="1" fill="#000"/><rect x="2" y="3" width="1" height="1" fill="#808000"/><rect x="3" y="3" width="1" height="1" fill="#000"/><rect x="4" y="3" width="1" height="1" fill="#e8e8e8"/><rect x="5" y="3" width="6" height="1" fill="#c0c0c0"/><rect x="11" y="3" width="1" height="1" fill="#e8e8e8"/><rect x="12" y="3" width="3" height="1" fill="#000"/><rect x="1" y="4" width="1" height="1" fill="#000"/><rect x="2" y="4" width="1" height="1" fill="#808000"/><rect x="3" y="4" width="1" height="1" fill="#000"/><rect x="4" y="4" width="1" height="1" fill="#e8e8e8"/><rect x="5" y="4" width="6" height="1" fill="#c0c0c0"/><rect x="11" y="4" width="1" height="1" fill="#e8e8e8"/><rect x="12" y="4" width="1" height="1" fill="#000"/><rect x="13" y="4" width="1" height="1" fill="#808000"/><rect x="14" y="4" width="1" height="1" fill="#000"/><rect x="1" y="5" width="1" height="1" fill="#000"/><rect x="2" y="5" width="1" height="1" fill="#808000"/><rect x="3" y="5" width="1" height="1" fill="#000"/><rect x="4" y="5" width="1" height="1" fill="#e8e8e8"/><rect x="5" y="5" width="6" height="1" fill="#c0c0c0"/><rect x="11" y="5" width="1" height="1" fill="#e8e8e8"/><rect x="12" y="5" width="1" height="1" fill="#000"/><rect x="13" y="5" width="1" height="1" fill="#808000"/><rect x="14" y="5" width="1" height="1" fill="#000"/><rect x="1" y="6" width="1" height="1" fill="#000"/><rect x="2" y="6" width="1" height="1" fill="#808000"/><rect x="3" y="6" width="1" height="1" fill="#000"/><rect x="4" y="6" width="1" height="1" fill="#e8e8e8"/><rect x="5" y="6" width="6" height="1" fill="#c0c0c0"/><rect x="11" y="6" width="1" height="1" fill="#e8e8e8"/><rect x="12" y="6" width="1" height="1" fill="#000"/><rect x="13" y="6" width="1" height="1" fill="#808000"/><rect x="14" y="6" width="1" height="1" fill="#000"/><rect x="1" y="7" width="1" height="1" fill="#000"/><rect x="2" y="7" width="1" height="1" fill="#808000"/><rect x="3" y="7" width="1" height="1" fill="#000"/><rect x="4" y="7" width="8" height="1" fill="#e8e8e8"/><rect x="12" y="7" width="1" height="1" fill="#000"/><rect x="13" y="7" width="1" height="1" fill="#808000"/><rect x="14" y="7" width="1" height="1" fill="#000"/><rect x="1" y="8" width="1" height="1" fill="#000"/><rect x="2" y="8" width="2" height="1" fill="#808000"/><rect x="4" y="8" width="8" height="1" fill="#000"/><rect x="12" y="8" width="2" height="1" fill="#808000"/><rect x="14" y="8" width="1" height="1" fill="#000"/><rect x="1" y="9" width="1" height="1" fill="#000"/><rect x="2" y="9" width="12" height="1" fill="#808000"/><rect x="14" y="9" width="1" height="1" fill="#000"/><rect x="1" y="10" width="1" height="1" fill="#000"/><rect x="2" y="10" width="2" height="1" fill="#808000"/><rect x="4" y="10" width="9" height="1" fill="#000"/><rect x="13" y="10" width="1" height="1" fill="#808000"/><rect x="14" y="10" width="1" height="1" fill="#000"/><rect x="1" y="11" width="1" height="1" fill="#000"/><rect x="2" y="11" width="2" height="1" fill="#808000"/><rect x="4" y="11" width="6" height="1" fill="#000"/><rect x="10" y="11" width="2" height="1" fill="#d8d8d8"/><rect x="12" y="11" width="1" height="1" fill="#000"/><rect x="13" y="11" width="1" height="1" fill="#808000"/><rect x="14" y="11" width="1" height="1" fill="#000"/><rect x="1" y="12" width="1" height="1" fill="#000"/><rect x="2" y="12" width="2" height="1" fill="#808000"/><rect x="4" y="12" width="6" height="1" fill="#000"/><rect x="10" y="12" width="2" height="1" fill="#fff"/><rect x="12" y="12" width="1" height="1" fill="#000"/><rect x="13" y="12" width="1" height="1" fill="#808000"/><rect x="14" y="12" width="1" height="1" fill="#000"/><rect x="1" y="13" width="1" height="1" fill="#000"/><rect x="2" y="13" width="2" height="1" fill="#808000"/><rect x="4" y="13" width="6" height="1" fill="#000"/><rect x="10" y="13" width="2" height="1" fill="#d8d8d8"/><rect x="12" y="13" width="1" height="1" fill="#000"/><rect x="13" y="13" width="1" height="1" fill="#808000"/><rect x="14" y="13" width="1" height="1" fill="#000"/><rect x="2" y="14" width="13" height="1" fill="#000"/></svg></div></div>
<div style="position:absolute;left:92px;top:50px;width:28px;height:28px;box-sizing:border-box;border:1px solid #d4d0c8;"><div style="position:absolute;left:5px;top:5px;width:16px;height:16px"><svg width="16" height="16" viewBox="0 0 16 16" shape-rendering="crispEdges" style="display:block;overflow:visible"><rect x="2" y="0" width="14" height="1" fill="#000"/><rect x="2" y="1" width="1" height="1" fill="#000"/><rect x="3" y="1" width="1" height="1" fill="#808000"/><rect x="4" y="1" width="1" height="1" fill="#000"/><rect x="5" y="1" width="8" height="1" fill="#e8e8e8"/><rect x="13" y="1" width="1" height="1" fill="#000"/><rect x="14" y="1" width="1" height="1" fill="#fff"/><rect x="15" y="1" width="1" height="1" fill="#000"/><rect x="2" y="2" width="1" height="1" fill="#000"/><rect x="3" y="2" width="1" height="1" fill="#808000"/><rect x="4" y="2" width="1" height="1" fill="#000"/><rect x="5" y="2" width="1" height="1" fill="#e8e8e8"/><rect x="6" y="2" width="6" height="1" fill="#c0c0c0"/><rect x="12" y="2" width="1" height="1" fill="#e8e8e8"/><rect x="13" y="2" width="3" height="1" fill="#000"/><rect x="2" y="3" width="1" height="1" fill="#000"/><rect x="3" y="3" width="1" height="1" fill="#808000"/><rect x="4" y="3" width="1" height="1" fill="#000"/><rect x="5" y="3" width="1" height="1" fill="#e8e8e8"/><rect x="6" y="3" width="6" height="1" fill="#c0c0c0"/><rect x="12" y="3" width="1" height="1" fill="#e8e8e8"/><rect x="13" y="3" width="1" height="1" fill="#000"/><rect x="14" y="3" width="1" height="1" fill="#808000"/><rect x="15" y="3" width="1" height="1" fill="#000"/><rect x="2" y="4" width="1" height="1" fill="#000"/><rect x="3" y="4" width="1" height="1" fill="#808000"/><rect x="4" y="4" width="1" height="1" fill="#000"/><rect x="5" y="4" width="1" height="1" fill="#e8e8e8"/><rect x="6" y="4" width="6" height="1" fill="#c0c0c0"/><rect x="12" y="4" width="1" height="1" fill="#e8e8e8"/><rect x="13" y="4" width="1" height="1" fill="#000"/><rect x="14" y="4" width="1" height="1" fill="#808000"/><rect x="15" y="4" width="1" height="1" fill="#000"/><rect x="2" y="5" width="1" height="1" fill="#000"/><rect x="3" y="5" width="1" height="1" fill="#808000"/><rect x="4" y="5" width="1" height="1" fill="#000"/><rect x="5" y="5" width="1" height="1" fill="#e8e8e8"/><rect x="6" y="5" width="6" height="1" fill="#c0c0c0"/><rect x="12" y="5" width="1" height="1" fill="#e8e8e8"/><rect x="13" y="5" width="1" height="1" fill="#000"/><rect x="14" y="5" width="1" height="1" fill="#808000"/><rect x="15" y="5" width="1" height="1" fill="#000"/><rect x="2" y="6" width="1" height="1" fill="#000"/><rect x="3" y="6" width="1" height="1" fill="#808000"/><rect x="4" y="6" width="1" height="1" fill="#000"/><rect x="5" y="6" width="8" height="1" fill="#e8e8e8"/><rect x="13" y="6" width="1" height="1" fill="#000"/><rect x="14" y="6" width="1" height="1" fill="#808000"/><rect x="15" y="6" width="1" height="1" fill="#000"/><rect x="2" y="7" width="1" height="1" fill="#000"/><rect x="3" y="7" width="2" height="1" fill="#808000"/><rect x="5" y="7" width="8" height="1" fill="#000"/><rect x="13" y="7" width="2" height="1" fill="#808000"/><rect x="15" y="7" width="1" height="1" fill="#000"/><rect x="2" y="8" width="1" height="1" fill="#000"/><rect x="3" y="8" width="12" height="1" fill="#808000"/><rect x="15" y="8" width="1" height="1" fill="#000"/><rect x="2" y="9" width="1" height="1" fill="#000"/><rect x="3" y="9" width="2" height="1" fill="#808000"/><rect x="5" y="9" width="9" height="1" fill="#000"/><rect x="14" y="9" width="1" height="1" fill="#808000"/><rect x="15" y="9" width="1" height="1" fill="#000"/><rect x="2" y="10" width="1" height="1" fill="#000"/><rect x="3" y="10" width="2" height="1" fill="#808000"/><rect x="5" y="10" width="6" height="1" fill="#000"/><rect x="11" y="10" width="2" height="1" fill="#d8d8d8"/><rect x="13" y="10" width="1" height="1" fill="#000"/><rect x="14" y="10" width="1" height="1" fill="#808000"/><rect x="15" y="10" width="1" height="1" fill="#000"/><rect x="2" y="11" width="1" height="1" fill="#000"/><rect x="3" y="11" width="2" height="1" fill="#808000"/><rect x="5" y="11" width="6" height="1" fill="#000"/><rect x="11" y="11" width="2" height="1" fill="#fff"/><rect x="13" y="11" width="1" height="1" fill="#000"/><rect x="14" y="11" width="1" height="1" fill="#808000"/><rect x="15" y="11" width="1" height="1" fill="#000"/><rect x="2" y="12" width="1" height="1" fill="#000"/><rect x="3" y="12" width="2" height="1" fill="#808000"/><rect x="5" y="12" width="6" height="1" fill="#000"/><rect x="11" y="12" width="2" height="1" fill="#d8d8d8"/><rect x="13" y="12" width="1" height="1" fill="#000"/><rect x="14" y="12" width="1" height="1" fill="#808000"/><rect x="15" y="12" width="1" height="1" fill="#000"/><rect x="3" y="13" width="13" height="1" fill="#000"/><rect x="0" y="2" width="14" height="1" fill="#000"/><rect x="0" y="3" width="1" height="1" fill="#000"/><rect x="1" y="3" width="1" height="1" fill="#808000"/><rect x="2" y="3" width="1" height="1" fill="#000"/><rect x="3" y="3" width="8" height="1" fill="#e8e8e8"/><rect x="11" y="3" width="1" height="1" fill="#000"/><rect x="12" y="3" width="1" height="1" fill="#fff"/><rect x="13" y="3" width="1" height="1" fill="#000"/><rect x="0" y="4" width="1" height="1" fill="#000"/><rect x="1" y="4" width="1" height="1" fill="#808000"/><rect x="2" y="4" width="1" height="1" fill="#000"/><rect x="3" y="4" width="1" height="1" fill="#e8e8e8"/><rect x="4" y="4" width="6" height="1" fill="#c0c0c0"/><rect x="10" y="4" width="1" height="1" fill="#e8e8e8"/><rect x="11" y="4" width="3" height="1" fill="#000"/><rect x="0" y="5" width="1" height="1" fill="#000"/><rect x="1" y="5" width="1" height="1" fill="#808000"/><rect x="2" y="5" width="1" height="1" fill="#000"/><rect x="3" y="5" width="1" height="1" fill="#e8e8e8"/><rect x="4" y="5" width="6" height="1" fill="#c0c0c0"/><rect x="10" y="5" width="1" height="1" fill="#e8e8e8"/><rect x="11" y="5" width="1" height="1" fill="#000"/><rect x="12" y="5" width="1" height="1" fill="#808000"/><rect x="13" y="5" width="1" height="1" fill="#000"/><rect x="0" y="6" width="1" height="1" fill="#000"/><rect x="1" y="6" width="1" height="1" fill="#808000"/><rect x="2" y="6" width="1" height="1" fill="#000"/><rect x="3" y="6" width="1" height="1" fill="#e8e8e8"/><rect x="4" y="6" width="6" height="1" fill="#c0c0c0"/><rect x="10" y="6" width="1" height="1" fill="#e8e8e8"/><rect x="11" y="6" width="1" height="1" fill="#000"/><rect x="12" y="6" width="1" height="1" fill="#808000"/><rect x="13" y="6" width="1" height="1" fill="#000"/><rect x="0" y="7" width="1" height="1" fill="#000"/><rect x="1" y="7" width="1" height="1" fill="#808000"/><rect x="2" y="7" width="1" height="1" fill="#000"/><rect x="3" y="7" width="1" height="1" fill="#e8e8e8"/><rect x="4" y="7" width="6" height="1" fill="#c0c0c0"/><rect x="10" y="7" width="1" height="1" fill="#e8e8e8"/><rect x="11" y="7" width="1" height="1" fill="#000"/><rect x="12" y="7" width="1" height="1" fill="#808000"/><rect x="13" y="7" width="1" height="1" fill="#000"/><rect x="0" y="8" width="1" height="1" fill="#000"/><rect x="1" y="8" width="1" height="1" fill="#808000"/><rect x="2" y="8" width="1" height="1" fill="#000"/><rect x="3" y="8" width="8" height="1" fill="#e8e8e8"/><rect x="11" y="8" width="1" height="1" fill="#000"/><rect x="12" y="8" width="1" height="1" fill="#808000"/><rect x="13" y="8" width="1" height="1" fill="#000"/><rect x="0" y="9" width="1" height="1" fill="#000"/><rect x="1" y="9" width="2" height="1" fill="#808000"/><rect x="3" y="9" width="8" height="1" fill="#000"/><rect x="11" y="9" width="2" height="1" fill="#808000"/><rect x="13" y="9" width="1" height="1" fill="#000"/><rect x="0" y="10" width="1" height="1" fill="#000"/><rect x="1" y="10" width="12" height="1" fill="#808000"/><rect x="13" y="10" width="1" height="1" fill="#000"/><rect x="0" y="11" width="1" height="1" fill="#000"/><rect x="1" y="11" width="2" height="1" fill="#808000"/><rect x="3" y="11" width="9" height="1" fill="#000"/><rect x="12" y="11" width="1" height="1" fill="#808000"/><rect x="13" y="11" width="1" height="1" fill="#000"/><rect x="0" y="12" width="1" height="1" fill="#000"/><rect x="1" y="12" width="2" height="1" fill="#808000"/><rect x="3" y="12" width="6" height="1" fill="#000"/><rect x="9" y="12" width="2" height="1" fill="#d8d8d8"/><rect x="11" y="12" width="1" height="1" fill="#000"/><rect x="12" y="12" width="1" height="1" fill="#808000"/><rect x="13" y="12" width="1" height="1" fill="#000"/><rect x="0" y="13" width="1" height="1" fill="#000"/><rect x="1" y="13" width="2" height="1" fill="#808000"/><rect x="3" y="13" width="6" height="1" fill="#000"/><rect x="9" y="13" width="2" height="1" fill="#fff"/><rect x="11" y="13" width="1" height="1" fill="#000"/><rect x="12" y="13" width="1" height="1" fill="#808000"/><rect x="13" y="13" width="1" height="1" fill="#000"/><rect x="0" y="14" width="1" height="1" fill="#000"/><rect x="1" y="14" width="2" height="1" fill="#808000"/><rect x="3" y="14" width="6" height="1" fill="#000"/><rect x="9" y="14" width="2" height="1" fill="#d8d8d8"/><rect x="11" y="14" width="1" height="1" fill="#000"/><rect x="12" y="14" width="1" height="1" fill="#808000"/><rect x="13" y="14" width="1" height="1" fill="#000"/><rect x="1" y="15" width="13" height="1" fill="#000"/></svg></div></div>
<div style="position:absolute;left:120px;top:50px;width:22px;height:28px;box-sizing:border-box;border:1px solid #d4d0c8;"><div style="position:absolute;left:2px;top:5px;width:16px;height:16px"><svg width="17" height="16" viewBox="0 0 17 16" shape-rendering="crispEdges" style="display:block;overflow:visible"><rect x="5" y="1" width="9" height="1" fill="#000"/><rect x="4" y="2" width="1" height="1" fill="#000"/><rect x="5" y="2" width="8" height="1" fill="#fff"/><rect x="13" y="2" width="1" height="1" fill="#000"/><rect x="4" y="3" width="1" height="1" fill="#000"/><rect x="5" y="3" width="1" height="1" fill="#fff"/><rect x="6" y="3" width="5" height="1" fill="#000"/><rect x="11" y="3" width="1" height="1" fill="#fff"/><rect x="12" y="3" width="1" height="1" fill="#000"/><rect x="3" y="4" width="1" height="1" fill="#000"/><rect x="4" y="4" width="8" height="1" fill="#fff"/><rect x="12" y="4" width="1" height="1" fill="#000"/><rect x="3" y="5" width="1" height="1" fill="#000"/><rect x="4" y="5" width="1" height="1" fill="#fff"/><rect x="5" y="5" width="5" height="1" fill="#000"/><rect x="10" y="5" width="1" height="1" fill="#fff"/><rect x="11" y="5" width="4" height="1" fill="#000"/><rect x="2" y="6" width="1" height="1" fill="#000"/><rect x="3" y="6" width="8" height="1" fill="#fff"/><rect x="11" y="6" width="1" height="1" fill="#000"/><rect x="12" y="6" width="1" height="1" fill="#c0c0c0"/><rect x="13" y="6" width="1" height="1" fill="#000"/><rect x="14" y="6" width="1" height="1" fill="#c0c0c0"/><rect x="15" y="6" width="1" height="1" fill="#000"/><rect x="1" y="7" width="10" height="1" fill="#000"/><rect x="11" y="7" width="1" height="1" fill="#c0c0c0"/><rect x="12" y="7" width="1" height="1" fill="#000"/><rect x="13" y="7" width="1" height="1" fill="#c0c0c0"/><rect x="14" y="7" width="2" height="1" fill="#000"/><rect x="0" y="8" width="1" height="1" fill="#000"/><rect x="1" y="8" width="10" height="1" fill="#d8d8d8"/><rect x="11" y="8" width="1" height="1" fill="#000"/><rect x="12" y="8" width="1" height="1" fill="#c0c0c0"/><rect x="13" y="8" width="1" height="1" fill="#000"/><rect x="14" y="8" width="1" height="1" fill="#d8d8d8"/><rect x="15" y="8" width="1" height="1" fill="#000"/><rect x="0" y="9" width="13" height="1" fill="#000"/><rect x="13" y="9" width="2" height="1" fill="#d8d8d8"/><rect x="15" y="9" width="1" height="1" fill="#000"/><rect x="0" y="10" width="1" height="1" fill="#000"/><rect x="1" y="10" width="6" height="1" fill="#d8d8d8"/><rect x="7" y="10" width="3" height="1" fill="#ffff00"/><rect x="10" y="10" width="2" height="1" fill="#d8d8d8"/><rect x="12" y="10" width="1" height="1" fill="#000"/><rect x="13" y="10" width="1" height="1" fill="#d8d8d8"/><rect x="14" y="10" width="1" height="1" fill="#000"/><rect x="0" y="11" width="1" height="1" fill="#000"/><rect x="1" y="11" width="6" height="1" fill="#d8d8d8"/><rect x="7" y="11" width="3" height="1" fill="#ffff00"/><rect x="10" y="11" width="2" height="1" fill="#d8d8d8"/><rect x="12" y="11" width="1" height="1" fill="#000"/><rect x="13" y="11" width="1" height="1" fill="#d8d8d8"/><rect x="14" y="11" width="1" height="1" fill="#000"/><rect x="0" y="12" width="13" height="1" fill="#000"/><rect x="13" y="12" width="1" height="1" fill="#fff"/><rect x="14" y="12" width="1" height="1" fill="#000"/><rect x="1" y="13" width="1" height="1" fill="#000"/><rect x="2" y="13" width="9" height="1" fill="#d8d8d8"/><rect x="11" y="13" width="1" height="1" fill="#000"/><rect x="12" y="13" width="1" height="1" fill="#fff"/><rect x="13" y="13" width="1" height="1" fill="#000"/><rect x="2" y="14" width="11" height="1" fill="#000"/></svg></div></div>
<div style="position:absolute;left:142px;top:50px;width:12px;height:28px;box-sizing:border-box;border:1px solid #d4d0c8"><div style="position:absolute;left:4px;top:4px;width:1px;height:19px;background:#808080"></div><div style="position:absolute;left:5px;top:4px;width:1px;height:19px;background:#fff"></div></div>
<div style="position:absolute;left:154px;top:50px;width:22px;height:28px;box-sizing:border-box;border:1px solid #d4d0c8;"><div style="position:absolute;left:2px;top:5px;width:16px;height:16px"><svg width="16" height="16" viewBox="0 0 16 16" shape-rendering="crispEdges" style="display:block;overflow:visible"><rect x="12" y="1" width="1" height="1" fill="#000"/><rect x="8" y="2" width="1" height="1" fill="#000"/><rect x="11" y="2" width="1" height="1" fill="#000"/><rect x="12" y="2" width="1" height="1" fill="#ff00ff"/><rect x="13" y="2" width="1" height="1" fill="#000"/><rect x="7" y="3" width="1" height="1" fill="#000"/><rect x="8" y="3" width="1" height="1" fill="#ffff00"/><rect x="9" y="3" width="1" height="1" fill="#000"/><rect x="11" y="3" width="2" height="1" fill="#000"/><rect x="13" y="3" width="1" height="1" fill="#ff00ff"/><rect x="14" y="3" width="1" height="1" fill="#000"/><rect x="6" y="4" width="1" height="1" fill="#000"/><rect x="7" y="4" width="1" height="1" fill="#ffff00"/><rect x="8" y="4" width="2" height="1" fill="#000"/><rect x="12" y="4" width="3" height="1" fill="#000"/><rect x="6" y="5" width="4" height="1" fill="#000"/><rect x="11" y="5" width="1" height="1" fill="#000"/><rect x="13" y="5" width="1" height="1" fill="#000"/><rect x="5" y="6" width="1" height="1" fill="#000"/><rect x="10" y="6" width="1" height="1" fill="#000"/><rect x="2" y="7" width="1" height="1" fill="#000"/><rect x="4" y="7" width="1" height="1" fill="#000"/><rect x="7" y="7" width="1" height="1" fill="#000"/><rect x="9" y="7" width="1" height="1" fill="#000"/><rect x="12" y="7" width="3" height="1" fill="#000"/><rect x="1" y="8" width="1" height="1" fill="#000"/><rect x="2" y="8" width="1" height="1" fill="#ff00ff"/><rect x="3" y="8" width="1" height="1" fill="#000"/><rect x="6" y="8" width="1" height="1" fill="#000"/><rect x="7" y="8" width="1" height="1" fill="#00ff00"/><rect x="8" y="8" width="1" height="1" fill="#000"/><rect x="11" y="8" width="2" height="1" fill="#000"/><rect x="13" y="8" width="1" height="1" fill="#00ffff"/><rect x="14" y="8" width="1" height="1" fill="#000"/><rect x="1" y="9" width="2" height="1" fill="#000"/><rect x="3" y="9" width="1" height="1" fill="#ff00ff"/><rect x="4" y="9" width="1" height="1" fill="#000"/><rect x="6" y="9" width="2" height="1" fill="#000"/><rect x="8" y="9" width="1" height="1" fill="#00ff00"/><rect x="9" y="9" width="1" height="1" fill="#000"/><rect x="12" y="9" width="2" height="1" fill="#000"/><rect x="14" y="9" width="1" height="1" fill="#00ffff"/><rect x="15" y="9" width="1" height="1" fill="#000"/><rect x="2" y="10" width="3" height="1" fill="#000"/><rect x="7" y="10" width="3" height="1" fill="#000"/><rect x="13" y="10" width="2" height="1" fill="#000"/><rect x="3" y="11" width="1" height="1" fill="#000"/><rect x="9" y="11" width="3" height="1" fill="#000"/><rect x="8" y="12" width="2" height="1" fill="#000"/><rect x="10" y="12" width="1" height="1" fill="#ffff00"/><rect x="11" y="12" width="2" height="1" fill="#000"/><rect x="8" y="13" width="1" height="1" fill="#000"/><rect x="9" y="13" width="1" height="1" fill="#ffff00"/><rect x="10" y="13" width="2" height="1" fill="#000"/><rect x="9" y="14" width="2" height="1" fill="#000"/></svg></div></div>
<div style="position:absolute;left:176px;top:50px;width:22px;height:28px;box-sizing:border-box;border:1px solid #d4d0c8;"><div style="position:absolute;left:2px;top:5px;width:16px;height:16px"><svg width="16" height="16" viewBox="0 0 16 16" shape-rendering="crispEdges" style="display:block;overflow:visible"><rect x="0" y="0" width="2" height="1" fill="#c0c0c0"/><rect x="2" y="0" width="10" height="1" fill="#000"/><rect x="12" y="0" width="4" height="1" fill="#c0c0c0"/><rect x="0" y="1" width="2" height="1" fill="#c0c0c0"/><rect x="2" y="1" width="1" height="1" fill="#000"/><rect x="3" y="1" width="8" height="1" fill="#fff"/><rect x="11" y="1" width="2" height="1" fill="#000"/><rect x="13" y="1" width="3" height="1" fill="#c0c0c0"/><rect x="0" y="2" width="2" height="1" fill="#c0c0c0"/><rect x="2" y="2" width="1" height="1" fill="#000"/><rect x="3" y="2" width="1" height="1" fill="#fff"/><rect x="4" y="2" width="5" height="1" fill="#000"/><rect x="9" y="2" width="2" height="1" fill="#fff"/><rect x="11" y="2" width="1" height="1" fill="#000"/><rect x="12" y="2" width="1" height="1" fill="#fff"/><rect x="13" y="2" width="1" height="1" fill="#000"/><rect x="14" y="2" width="2" height="1" fill="#c0c0c0"/><rect x="0" y="3" width="2" height="1" fill="#c0c0c0"/><rect x="2" y="3" width="1" height="1" fill="#000"/><rect x="3" y="3" width="8" height="1" fill="#fff"/><rect x="11" y="3" width="4" height="1" fill="#000"/><rect x="15" y="3" width="1" height="1" fill="#c0c0c0"/><rect x="0" y="4" width="2" height="1" fill="#c0c0c0"/><rect x="2" y="4" width="1" height="1" fill="#000"/><rect x="3" y="4" width="1" height="1" fill="#fff"/><rect x="4" y="4" width="7" height="1" fill="#000"/><rect x="11" y="4" width="3" height="1" fill="#fff"/><rect x="14" y="4" width="1" height="1" fill="#000"/><rect x="15" y="4" width="1" height="1" fill="#c0c0c0"/><rect x="0" y="5" width="2" height="1" fill="#c0c0c0"/><rect x="2" y="5" width="1" height="1" fill="#000"/><rect x="3" y="5" width="9" height="1" fill="#fff"/><rect x="12" y="5" width="1" height="1" fill="#800000"/><rect x="13" y="5" width="1" height="1" fill="#fff"/><rect x="14" y="5" width="1" height="1" fill="#000"/><rect x="15" y="5" width="1" height="1" fill="#c0c0c0"/><rect x="0" y="6" width="2" height="1" fill="#c0c0c0"/><rect x="2" y="6" width="1" height="1" fill="#000"/><rect x="3" y="6" width="1" height="1" fill="#fff"/><rect x="4" y="6" width="5" height="1" fill="#000"/><rect x="9" y="6" width="2" height="1" fill="#fff"/><rect x="11" y="6" width="1" height="1" fill="#800000"/><rect x="12" y="6" width="2" height="1" fill="#fff"/><rect x="14" y="6" width="1" height="1" fill="#000"/><rect x="15" y="6" width="1" height="1" fill="#c0c0c0"/><rect x="0" y="7" width="2" height="1" fill="#c0c0c0"/><rect x="2" y="7" width="1" height="1" fill="#000"/><rect x="3" y="7" width="7" height="1" fill="#fff"/><rect x="10" y="7" width="1" height="1" fill="#800000"/><rect x="11" y="7" width="3" height="1" fill="#fff"/><rect x="14" y="7" width="1" height="1" fill="#000"/><rect x="15" y="7" width="1" height="1" fill="#c0c0c0"/><rect x="0" y="8" width="2" height="1" fill="#c0c0c0"/><rect x="2" y="8" width="1" height="1" fill="#000"/><rect x="3" y="8" width="2" height="1" fill="#fff"/><rect x="5" y="8" width="1" height="1" fill="#800000"/><rect x="6" y="8" width="3" height="1" fill="#fff"/><rect x="9" y="8" width="2" height="1" fill="#800000"/><rect x="11" y="8" width="3" height="1" fill="#fff"/><rect x="14" y="8" width="1" height="1" fill="#000"/><rect x="15" y="8" width="1" height="1" fill="#c0c0c0"/><rect x="0" y="9" width="2" height="1" fill="#c0c0c0"/><rect x="2" y="9" width="1" height="1" fill="#000"/><rect x="3" y="9" width="1" height="1" fill="#fff"/><rect x="4" y="9" width="3" height="1" fill="#800000"/><rect x="7" y="9" width="1" height="1" fill="#fff"/><rect x="8" y="9" width="2" height="1" fill="#800000"/><rect x="10" y="9" width="4" height="1" fill="#fff"/><rect x="14" y="9" width="1" height="1" fill="#000"/><rect x="15" y="9" width="1" height="1" fill="#c0c0c0"/><rect x="0" y="10" width="2" height="1" fill="#c0c0c0"/><rect x="2" y="10" width="1" height="1" fill="#000"/><rect x="3" y="10" width="2" height="1" fill="#fff"/><rect x="5" y="10" width="4" height="1" fill="#800000"/><rect x="9" y="10" width="1" height="1" fill="#fff"/><rect x="10" y="10" width="2" height="1" fill="#000"/><rect x="12" y="10" width="2" height="1" fill="#fff"/><rect x="14" y="10" width="1" height="1" fill="#000"/><rect x="15" y="10" width="1" height="1" fill="#c0c0c0"/><rect x="0" y="11" width="2" height="1" fill="#c0c0c0"/><rect x="2" y="11" width="1" height="1" fill="#000"/><rect x="3" y="11" width="3" height="1" fill="#fff"/><rect x="6" y="11" width="2" height="1" fill="#800000"/><rect x="8" y="11" width="6" height="1" fill="#fff"/><rect x="14" y="11" width="1" height="1" fill="#000"/><rect x="15" y="11" width="1" height="1" fill="#c0c0c0"/><rect x="0" y="12" width="2" height="1" fill="#c0c0c0"/><rect x="2" y="12" width="1" height="1" fill="#000"/><rect x="3" y="12" width="1" height="1" fill="#fff"/><rect x="4" y="12" width="2" height="1" fill="#000"/><rect x="6" y="12" width="1" height="1" fill="#fff"/><rect x="7" y="12" width="1" height="1" fill="#800000"/><rect x="8" y="12" width="1" height="1" fill="#fff"/><rect x="9" y="12" width="3" height="1" fill="#000"/><rect x="12" y="12" width="2" height="1" fill="#fff"/><rect x="14" y="12" width="1" height="1" fill="#000"/><rect x="15" y="12" width="1" height="1" fill="#c0c0c0"/><rect x="0" y="13" width="2" height="1" fill="#c0c0c0"/><rect x="2" y="13" width="1" height="1" fill="#000"/><rect x="3" y="13" width="11" height="1" fill="#fff"/><rect x="14" y="13" width="1" height="1" fill="#000"/><rect x="15" y="13" width="1" height="1" fill="#c0c0c0"/><rect x="0" y="14" width="2" height="1" fill="#c0c0c0"/><rect x="2" y="14" width="13" height="1" fill="#000"/><rect x="15" y="14" width="1" height="1" fill="#c0c0c0"/><rect x="0" y="15" width="16" height="1" fill="#c0c0c0"/></svg></div></div>
<div style="position:absolute;left:198px;top:50px;width:12px;height:28px;box-sizing:border-box;border:1px solid #d4d0c8"><div style="position:absolute;left:4px;top:4px;width:1px;height:19px;background:#808080"></div><div style="position:absolute;left:5px;top:4px;width:1px;height:19px;background:#fff"></div></div>
<div style="position:absolute;left:210px;top:50px;width:22px;height:28px;box-sizing:border-box;border:1px solid #d4d0c8;"><div style="position:absolute;left:2px;top:5px;width:16px;height:16px"><svg width="16" height="16" viewBox="0 0 16 16" style="display:block;overflow:visible"><rect x="11" y="1" width="2" height="5" fill="#000"/><polygon points="8,0.6 0.6,7.6 15.4,7.6" fill="#ff0000"/><polygon points="8,0.6 9.2,1.8 4.5,6.5 2.6,6.5" fill="#d00000"/><rect x="2.5" y="7.5" width="11" height="7" fill="#fff" stroke="#000" shape-rendering="crispEdges"/><rect x="4" y="9" width="2" height="2" fill="#000"/><rect x="10" y="9" width="2" height="2" fill="#000"/><rect x="7" y="11" width="2" height="3" fill="#000"/></svg></div></div>
<div style="position:absolute;left:232px;top:50px;width:22px;height:28px;box-sizing:border-box;border:1px solid #d4d0c8;"><div style="position:absolute;left:2px;top:5px;width:16px;height:16px"><svg width="16" height="16" viewBox="0 0 16 16" style="display:block;overflow:visible"><polygon points="0.5,5.5 7.8,1 16,8.2 16,11 7,16 0.5,9" fill="#000"/><polygon points="1.3,5.8 7.8,2 14.8,8.2 7.6,12.3" fill="#c80000"/><polygon points="1.3,6.8 7,12.8 6.6,15 1.3,9" fill="#c80000"/><polygon points="8,13 15.3,9 15.3,10.6 8,14.8" fill="#fff"/><line x1="2.5" y1="5.8" x2="8.2" y2="11.8" stroke="#e8a0a0" stroke-width="0.8"/><line x1="8.5" y1="14" x2="14" y2="10.8" stroke="#000" stroke-width="0.7"/></svg></div></div>
<div style="position:absolute;left:254px;top:50px;width:22px;height:28px;box-sizing:border-box;border:1px solid #d4d0c8;"><div style="position:absolute;left:2px;top:5px;width:16px;height:16px"><svg width="16" height="16" viewBox="0 0 16 16" shape-rendering="crispEdges" style="display:block;overflow:visible"><rect x="1" y="1" width="9" height="1" fill="#000"/><rect x="1" y="2" width="1" height="1" fill="#000"/><rect x="2" y="2" width="7" height="1" fill="#fff"/><rect x="9" y="2" width="1" height="1" fill="#000"/><rect x="1" y="3" width="1" height="1" fill="#000"/><rect x="2" y="3" width="2" height="1" fill="#fff"/><rect x="4" y="3" width="9" height="1" fill="#000"/><rect x="1" y="4" width="2" height="1" fill="#000"/><rect x="3" y="4" width="1" height="1" fill="#fff"/><rect x="4" y="4" width="1" height="1" fill="#000"/><rect x="5" y="4" width="7" height="1" fill="#fff"/><rect x="12" y="4" width="1" height="1" fill="#000"/><rect x="1" y="5" width="1" height="1" fill="#000"/><rect x="2" y="5" width="2" height="1" fill="#fff"/><rect x="4" y="5" width="1" height="1" fill="#000"/><rect x="5" y="5" width="2" height="1" fill="#fff"/><rect x="7" y="5" width="9" height="1" fill="#000"/><rect x="1" y="6" width="2" height="1" fill="#000"/><rect x="3" y="6" width="1" height="1" fill="#fff"/><rect x="4" y="6" width="2" height="1" fill="#000"/><rect x="6" y="6" width="1" height="1" fill="#fff"/><rect x="7" y="6" width="1" height="1" fill="#000"/><rect x="8" y="6" width="7" height="1" fill="#fff"/><rect x="15" y="6" width="1" height="1" fill="#000"/><rect x="1" y="7" width="1" height="1" fill="#000"/><rect x="2" y="7" width="2" height="1" fill="#fff"/><rect x="4" y="7" width="1" height="1" fill="#000"/><rect x="5" y="7" width="2" height="1" fill="#fff"/><rect x="7" y="7" width="1" height="1" fill="#000"/><rect x="8" y="7" width="1" height="1" fill="#fff"/><rect x="9" y="7" width="2" height="1" fill="#000"/><rect x="11" y="7" width="1" height="1" fill="#fff"/><rect x="12" y="7" width="2" height="1" fill="#000"/><rect x="14" y="7" width="1" height="1" fill="#fff"/><rect x="15" y="7" width="1" height="1" fill="#000"/><rect x="1" y="8" width="2" height="1" fill="#000"/><rect x="3" y="8" width="1" height="1" fill="#fff"/><rect x="4" y="8" width="2" height="1" fill="#000"/><rect x="6" y="8" width="1" height="1" fill="#fff"/><rect x="7" y="8" width="1" height="1" fill="#000"/><rect x="8" y="8" width="7" height="1" fill="#fff"/><rect x="15" y="8" width="1" height="1" fill="#000"/><rect x="1" y="9" width="4" height="1" fill="#000"/><rect x="5" y="9" width="2" height="1" fill="#fff"/><rect x="7" y="9" width="1" height="1" fill="#000"/><rect x="8" y="9" width="1" height="1" fill="#fff"/><rect x="9" y="9" width="2" height="1" fill="#000"/><rect x="11" y="9" width="1" height="1" fill="#fff"/><rect x="12" y="9" width="2" height="1" fill="#000"/><rect x="14" y="9" width="1" height="1" fill="#fff"/><rect x="15" y="9" width="1" height="1" fill="#000"/><rect x="4" y="10" width="2" height="1" fill="#000"/><rect x="6" y="10" width="1" height="1" fill="#fff"/><rect x="7" y="10" width="1" height="1" fill="#000"/><rect x="8" y="10" width="7" height="1" fill="#fff"/><rect x="15" y="10" width="1" height="1" fill="#000"/><rect x="4" y="11" width="4" height="1" fill="#000"/><rect x="8" y="11" width="1" height="1" fill="#fff"/><rect x="9" y="11" width="2" height="1" fill="#000"/><rect x="11" y="11" width="1" height="1" fill="#fff"/><rect x="12" y="11" width="2" height="1" fill="#000"/><rect x="14" y="11" width="1" height="1" fill="#fff"/><rect x="15" y="11" width="1" height="1" fill="#000"/><rect x="7" y="12" width="1" height="1" fill="#000"/><rect x="8" y="12" width="7" height="1" fill="#fff"/><rect x="15" y="12" width="1" height="1" fill="#000"/><rect x="7" y="13" width="9" height="1" fill="#000"/></svg></div></div>
<div style="position:absolute;left:276px;top:50px;width:22px;height:28px;box-sizing:border-box;border:1px solid #d4d0c8;"><div style="position:absolute;left:2px;top:5px;width:16px;height:16px"><svg width="16" height="16" viewBox="0 0 16 16" shape-rendering="crispEdges" style="display:block;overflow:visible"><rect x="12" y="1" width="1" height="1" fill="#800000"/><rect x="0" y="2" width="6" height="1" fill="#000"/><rect x="11" y="2" width="3" height="1" fill="#800000"/><rect x="0" y="3" width="1" height="1" fill="#000"/><rect x="1" y="3" width="4" height="1" fill="#fff"/><rect x="5" y="3" width="2" height="1" fill="#000"/><rect x="11" y="3" width="3" height="1" fill="#800000"/><rect x="0" y="4" width="1" height="1" fill="#000"/><rect x="1" y="4" width="1" height="1" fill="#fff"/><rect x="2" y="4" width="2" height="1" fill="#808080"/><rect x="4" y="4" width="1" height="1" fill="#fff"/><rect x="5" y="4" width="1" height="1" fill="#000"/><rect x="6" y="4" width="1" height="1" fill="#fff"/><rect x="7" y="4" width="1" height="1" fill="#000"/><rect x="11" y="4" width="3" height="1" fill="#800000"/><rect x="0" y="5" width="1" height="1" fill="#000"/><rect x="1" y="5" width="4" height="1" fill="#fff"/><rect x="5" y="5" width="4" height="1" fill="#000"/><rect x="11" y="5" width="3" height="1" fill="#800000"/><rect x="0" y="6" width="1" height="1" fill="#000"/><rect x="1" y="6" width="1" height="1" fill="#fff"/><rect x="2" y="6" width="2" height="1" fill="#808080"/><rect x="4" y="6" width="4" height="1" fill="#fff"/><rect x="8" y="6" width="1" height="1" fill="#000"/><rect x="11" y="6" width="3" height="1" fill="#800000"/><rect x="0" y="7" width="1" height="1" fill="#000"/><rect x="1" y="7" width="7" height="1" fill="#fff"/><rect x="8" y="7" width="1" height="1" fill="#000"/><rect x="11" y="7" width="3" height="1" fill="#800000"/><rect x="0" y="8" width="1" height="1" fill="#000"/><rect x="1" y="8" width="1" height="1" fill="#fff"/><rect x="2" y="8" width="5" height="1" fill="#808080"/><rect x="7" y="8" width="1" height="1" fill="#fff"/><rect x="8" y="8" width="1" height="1" fill="#000"/><rect x="12" y="8" width="1" height="1" fill="#800000"/><rect x="0" y="9" width="1" height="1" fill="#000"/><rect x="1" y="9" width="1" height="1" fill="#fff"/><rect x="2" y="9" width="1" height="1" fill="#808080"/><rect x="3" y="9" width="3" height="1" fill="#fff"/><rect x="6" y="9" width="1" height="1" fill="#808080"/><rect x="7" y="9" width="1" height="1" fill="#fff"/><rect x="8" y="9" width="1" height="1" fill="#000"/><rect x="12" y="9" width="1" height="1" fill="#800000"/><rect x="0" y="10" width="1" height="1" fill="#000"/><rect x="1" y="10" width="1" height="1" fill="#fff"/><rect x="2" y="10" width="5" height="1" fill="#808080"/><rect x="7" y="10" width="1" height="1" fill="#fff"/><rect x="8" y="10" width="1" height="1" fill="#000"/><rect x="0" y="11" width="1" height="1" fill="#000"/><rect x="1" y="11" width="7" height="1" fill="#fff"/><rect x="8" y="11" width="1" height="1" fill="#000"/><rect x="12" y="11" width="1" height="1" fill="#800000"/><rect x="0" y="12" width="9" height="1" fill="#000"/><rect x="11" y="12" width="3" height="1" fill="#800000"/><rect x="12" y="13" width="1" height="1" fill="#800000"/></svg></div></div>
<div style="position:absolute;left:298px;top:50px;width:12px;height:28px;box-sizing:border-box;border:1px solid #d4d0c8"><div style="position:absolute;left:4px;top:4px;width:1px;height:19px;background:#808080"></div><div style="position:absolute;left:5px;top:4px;width:1px;height:19px;background:#fff"></div></div>
<div style="position:absolute;left:310px;top:50px;width:22px;height:28px;box-sizing:border-box;border:1px solid #d4d0c8;"><div style="position:absolute;left:2px;top:5px;width:16px;height:16px"><svg width="16" height="16" viewBox="0 0 16 16" shape-rendering="crispEdges" style="display:block;overflow:visible"><rect x="6" y="0" width="4" height="1" fill="#000"/><rect x="3" y="1" width="3" height="1" fill="#000"/><rect x="6" y="1" width="4" height="1" fill="#c8d8c8"/><rect x="10" y="1" width="1" height="1" fill="#000"/><rect x="1" y="2" width="2" height="1" fill="#000"/><rect x="3" y="2" width="8" height="1" fill="#e800e8"/><rect x="11" y="2" width="1" height="1" fill="#000"/><rect x="0" y="3" width="1" height="1" fill="#000"/><rect x="1" y="3" width="2" height="1" fill="#c8d8c8"/><rect x="3" y="3" width="2" height="1" fill="#e800e8"/><rect x="5" y="3" width="4" height="1" fill="#0000d0"/><rect x="9" y="3" width="2" height="1" fill="#e800e8"/><rect x="11" y="3" width="1" height="1" fill="#000"/><rect x="0" y="4" width="2" height="1" fill="#000"/><rect x="2" y="4" width="1" height="1" fill="#c8d8c8"/><rect x="3" y="4" width="1" height="1" fill="#e800e8"/><rect x="4" y="4" width="1" height="1" fill="#0000d0"/><rect x="5" y="4" width="1" height="1" fill="#e800e8"/><rect x="6" y="4" width="2" height="1" fill="#f0f0d0"/><rect x="8" y="4" width="1" height="1" fill="#c8d8c8"/><rect x="9" y="4" width="1" height="1" fill="#0000d0"/><rect x="10" y="4" width="1" height="1" fill="#e800e8"/><rect x="11" y="4" width="1" height="1" fill="#0000d0"/><rect x="12" y="4" width="3" height="1" fill="#000"/><rect x="1" y="5" width="1" height="1" fill="#000"/><rect x="2" y="5" width="1" height="1" fill="#c8d8c8"/><rect x="3" y="5" width="1" height="1" fill="#e800e8"/><rect x="4" y="5" width="1" height="1" fill="#0000d0"/><rect x="5" y="5" width="2" height="1" fill="#f0f0d0"/><rect x="7" y="5" width="2" height="1" fill="#0000d0"/><rect x="9" y="5" width="1" height="1" fill="#e800e8"/><rect x="10" y="5" width="2" height="1" fill="#0000d0"/><rect x="12" y="5" width="3" height="1" fill="#fff"/><rect x="15" y="5" width="1" height="1" fill="#000"/><rect x="1" y="6" width="1" height="1" fill="#000"/><rect x="2" y="6" width="1" height="1" fill="#c8d8c8"/><rect x="3" y="6" width="1" height="1" fill="#e800e8"/><rect x="4" y="6" width="1" height="1" fill="#0000d0"/><rect x="5" y="6" width="1" height="1" fill="#f0f0d0"/><rect x="6" y="6" width="2" height="1" fill="#0000d0"/><rect x="8" y="6" width="2" height="1" fill="#e800e8"/><rect x="10" y="6" width="1" height="1" fill="#0000d0"/><rect x="11" y="6" width="3" height="1" fill="#fff"/><rect x="14" y="6" width="2" height="1" fill="#000"/><rect x="1" y="7" width="1" height="1" fill="#000"/><rect x="2" y="7" width="1" height="1" fill="#c8d8c8"/><rect x="3" y="7" width="1" height="1" fill="#e800e8"/><rect x="4" y="7" width="2" height="1" fill="#0000d0"/><rect x="6" y="7" width="1" height="1" fill="#c8d8c8"/><rect x="7" y="7" width="2" height="1" fill="#e800e8"/><rect x="9" y="7" width="1" height="1" fill="#0000d0"/><rect x="10" y="7" width="2" height="1" fill="#fff"/><rect x="12" y="7" width="1" height="1" fill="#c0c0c0"/><rect x="13" y="7" width="1" height="1" fill="#fff"/><rect x="14" y="7" width="1" height="1" fill="#000"/><rect x="1" y="8" width="1" height="1" fill="#000"/><rect x="2" y="8" width="1" height="1" fill="#c8d8c8"/><rect x="3" y="8" width="5" height="1" fill="#e800e8"/><rect x="8" y="8" width="1" height="1" fill="#0000d0"/><rect x="9" y="8" width="2" height="1" fill="#fff"/><rect x="11" y="8" width="1" height="1" fill="#c0c0c0"/><rect x="12" y="8" width="1" height="1" fill="#fff"/><rect x="13" y="8" width="2" height="1" fill="#000"/><rect x="1" y="9" width="1" height="1" fill="#000"/><rect x="2" y="9" width="1" height="1" fill="#c8d8c8"/><rect x="3" y="9" width="3" height="1" fill="#e800e8"/><rect x="6" y="9" width="2" height="1" fill="#0000d0"/><rect x="8" y="9" width="2" height="1" fill="#fff"/><rect x="10" y="9" width="1" height="1" fill="#c0c0c0"/><rect x="11" y="9" width="2" height="1" fill="#fff"/><rect x="13" y="9" width="1" height="1" fill="#000"/><rect x="0" y="10" width="1" height="1" fill="#000"/><rect x="1" y="10" width="1" height="1" fill="#c8d8c8"/><rect x="2" y="10" width="3" height="1" fill="#e800e8"/><rect x="5" y="10" width="2" height="1" fill="#0000d0"/><rect x="7" y="10" width="2" height="1" fill="#fff"/><rect x="9" y="10" width="1" height="1" fill="#c0c0c0"/><rect x="10" y="10" width="2" height="1" fill="#fff"/><rect x="12" y="10" width="2" height="1" fill="#000"/><rect x="0" y="11" width="1" height="1" fill="#000"/><rect x="1" y="11" width="1" height="1" fill="#c8d8c8"/><rect x="2" y="11" width="2" height="1" fill="#e800e8"/><rect x="4" y="11" width="1" height="1" fill="#0000d0"/><rect x="5" y="11" width="3" height="1" fill="#fff"/><rect x="8" y="11" width="1" height="1" fill="#c0c0c0"/><rect x="9" y="11" width="3" height="1" fill="#fff"/><rect x="12" y="11" width="1" height="1" fill="#000"/><rect x="0" y="12" width="1" height="1" fill="#000"/><rect x="1" y="12" width="1" height="1" fill="#c8d8c8"/><rect x="2" y="12" width="1" height="1" fill="#e800e8"/><rect x="3" y="12" width="2" height="1" fill="#000"/><rect x="5" y="12" width="2" height="1" fill="#fff"/><rect x="7" y="12" width="1" height="1" fill="#c0c0c0"/><rect x="8" y="12" width="3" height="1" fill="#fff"/><rect x="11" y="12" width="2" height="1" fill="#000"/><rect x="0" y="13" width="1" height="1" fill="#000"/><rect x="1" y="13" width="1" height="1" fill="#c8d8c8"/><rect x="2" y="13" width="1" height="1" fill="#e800e8"/><rect x="3" y="13" width="1" height="1" fill="#000"/><rect x="5" y="13" width="2" height="1" fill="#000"/><rect x="7" y="13" width="4" height="1" fill="#fff"/><rect x="11" y="13" width="1" height="1" fill="#000"/><rect x="0" y="14" width="1" height="1" fill="#000"/><rect x="1" y="14" width="1" height="1" fill="#c8d8c8"/><rect x="2" y="14" width="1" height="1" fill="#e800e8"/><rect x="3" y="14" width="1" height="1" fill="#000"/><rect x="7" y="14" width="2" height="1" fill="#000"/><rect x="9" y="14" width="2" height="1" fill="#fff"/><rect x="11" y="14" width="1" height="1" fill="#000"/><rect x="0" y="15" width="3" height="1" fill="#000"/><rect x="9" y="15" width="2" height="1" fill="#000"/></svg></div></div>
<div style="position:absolute;left:332px;top:50px;width:20px;height:28px;box-sizing:border-box;border:1px solid #d4d0c8;"><div style="position:absolute;left:2px;top:5px;width:16px;height:16px"><svg width="16" height="16" viewBox="0 0 16 16" shape-rendering="crispEdges" style="display:block;overflow:visible"><rect x="0" y="0" width="1" height="1" fill="#fff"/><rect x="1" y="0" width="10" height="1" fill="#000"/><rect x="11" y="0" width="3" height="1" fill="#fff"/><rect x="0" y="1" width="1" height="1" fill="#fff"/><rect x="1" y="1" width="1" height="1" fill="#000"/><rect x="2" y="1" width="8" height="1" fill="#fff"/><rect x="10" y="1" width="2" height="1" fill="#000"/><rect x="12" y="1" width="2" height="1" fill="#fff"/><rect x="0" y="2" width="1" height="1" fill="#fff"/><rect x="1" y="2" width="1" height="1" fill="#000"/><rect x="2" y="2" width="9" height="1" fill="#fff"/><rect x="11" y="2" width="2" height="1" fill="#000"/><rect x="13" y="2" width="1" height="1" fill="#fff"/><rect x="0" y="3" width="1" height="1" fill="#fff"/><rect x="1" y="3" width="1" height="1" fill="#000"/><rect x="2" y="3" width="1" height="1" fill="#fff"/><rect x="3" y="3" width="6" height="1" fill="#c0c0c0"/><rect x="9" y="3" width="2" height="1" fill="#fff"/><rect x="11" y="3" width="2" height="1" fill="#000"/><rect x="13" y="3" width="1" height="1" fill="#fff"/><rect x="0" y="4" width="1" height="1" fill="#fff"/><rect x="1" y="4" width="1" height="1" fill="#000"/><rect x="2" y="4" width="10" height="1" fill="#fff"/><rect x="12" y="4" width="1" height="1" fill="#000"/><rect x="13" y="4" width="1" height="1" fill="#fff"/><rect x="0" y="5" width="1" height="1" fill="#fff"/><rect x="1" y="5" width="1" height="1" fill="#000"/><rect x="2" y="5" width="1" height="1" fill="#fff"/><rect x="3" y="5" width="6" height="1" fill="#c0c0c0"/><rect x="9" y="5" width="3" height="1" fill="#fff"/><rect x="12" y="5" width="1" height="1" fill="#000"/><rect x="13" y="5" width="1" height="1" fill="#fff"/><rect x="0" y="6" width="1" height="1" fill="#fff"/><rect x="1" y="6" width="1" height="1" fill="#000"/><rect x="2" y="6" width="10" height="1" fill="#fff"/><rect x="12" y="6" width="1" height="1" fill="#000"/><rect x="13" y="6" width="1" height="1" fill="#fff"/><rect x="0" y="7" width="1" height="1" fill="#fff"/><rect x="1" y="7" width="1" height="1" fill="#000"/><rect x="2" y="7" width="1" height="1" fill="#fff"/><rect x="3" y="7" width="4" height="1" fill="#c0c0c0"/><rect x="7" y="7" width="5" height="1" fill="#fff"/><rect x="12" y="7" width="1" height="1" fill="#000"/><rect x="13" y="7" width="1" height="1" fill="#fff"/><rect x="0" y="8" width="1" height="1" fill="#fff"/><rect x="1" y="8" width="1" height="1" fill="#000"/><rect x="2" y="8" width="10" height="1" fill="#fff"/><rect x="12" y="8" width="1" height="1" fill="#000"/><rect x="13" y="8" width="1" height="1" fill="#fff"/><rect x="0" y="9" width="1" height="1" fill="#fff"/><rect x="1" y="9" width="1" height="1" fill="#000"/><rect x="2" y="9" width="1" height="1" fill="#fff"/><rect x="3" y="9" width="4" height="1" fill="#c0c0c0"/><rect x="7" y="9" width="5" height="1" fill="#fff"/><rect x="12" y="9" width="1" height="1" fill="#000"/><rect x="13" y="9" width="1" height="1" fill="#fff"/><rect x="0" y="10" width="1" height="1" fill="#fff"/><rect x="1" y="10" width="1" height="1" fill="#000"/><rect x="2" y="10" width="10" height="1" fill="#fff"/><rect x="12" y="10" width="1" height="1" fill="#000"/><rect x="13" y="10" width="1" height="1" fill="#fff"/><rect x="0" y="11" width="1" height="1" fill="#fff"/><rect x="1" y="11" width="1" height="1" fill="#000"/><rect x="2" y="11" width="1" height="1" fill="#fff"/><rect x="3" y="11" width="2" height="1" fill="#c0c0c0"/><rect x="5" y="11" width="7" height="1" fill="#fff"/><rect x="12" y="11" width="1" height="1" fill="#000"/><rect x="13" y="11" width="1" height="1" fill="#fff"/><rect x="0" y="12" width="1" height="1" fill="#fff"/><rect x="1" y="12" width="1" height="1" fill="#000"/><rect x="2" y="12" width="10" height="1" fill="#fff"/><rect x="12" y="12" width="1" height="1" fill="#000"/><rect x="13" y="12" width="1" height="1" fill="#fff"/><rect x="0" y="13" width="1" height="1" fill="#fff"/><rect x="1" y="13" width="1" height="1" fill="#000"/><rect x="2" y="13" width="10" height="1" fill="#fff"/><rect x="12" y="13" width="1" height="1" fill="#000"/><rect x="13" y="13" width="1" height="1" fill="#fff"/><rect x="0" y="14" width="1" height="1" fill="#fff"/><rect x="1" y="14" width="1" height="1" fill="#000"/><rect x="2" y="14" width="10" height="1" fill="#fff"/><rect x="12" y="14" width="1" height="1" fill="#000"/><rect x="13" y="14" width="1" height="1" fill="#fff"/><rect x="0" y="15" width="1" height="1" fill="#fff"/><rect x="1" y="15" width="12" height="1" fill="#000"/><rect x="13" y="15" width="1" height="1" fill="#fff"/><text x="5.8" y="14" font-family="Liberation Sans, sans-serif" font-size="6.4" font-weight="700" font-style="italic" fill="#ff0000" shape-rendering="auto">A</text></svg></div></div>
<div style="position:absolute;left:352px;top:50px;width:12px;height:28px;box-sizing:border-box;border:1px solid #d4d0c8"><div style="position:absolute;left:4px;top:4px;width:1px;height:19px;background:#808080"></div><div style="position:absolute;left:5px;top:4px;width:1px;height:19px;background:#fff"></div></div>
<div style="position:absolute;left:364px;top:50px;width:22px;height:28px;box-sizing:border-box;border:1px solid #d4d0c8;"><div style="position:absolute;left:2px;top:5px;width:16px;height:16px"><svg width="16" height="16" viewBox="0 0 16 16" shape-rendering="crispEdges" style="display:block;overflow:visible"><rect x="7" y="1" width="6" height="1" fill="#000"/><rect x="14" y="1" width="2" height="1" fill="#000080"/><rect x="6" y="2" width="1" height="1" fill="#000"/><rect x="7" y="2" width="1" height="1" fill="#fff"/><rect x="8" y="2" width="1" height="1" fill="#000"/><rect x="9" y="2" width="4" height="1" fill="#fff"/><rect x="13" y="2" width="1" height="1" fill="#000"/><rect x="14" y="2" width="2" height="1" fill="#000080"/><rect x="5" y="3" width="1" height="1" fill="#000"/><rect x="6" y="3" width="1" height="1" fill="#fff"/><rect x="7" y="3" width="1" height="1" fill="#000"/><rect x="8" y="3" width="1" height="1" fill="#fff"/><rect x="9" y="3" width="1" height="1" fill="#000"/><rect x="10" y="3" width="4" height="1" fill="#fff"/><rect x="14" y="3" width="2" height="1" fill="#000080"/><rect x="0" y="4" width="5" height="1" fill="#000"/><rect x="5" y="4" width="1" height="1" fill="#fff"/><rect x="6" y="4" width="1" height="1" fill="#000"/><rect x="7" y="4" width="1" height="1" fill="#fff"/><rect x="8" y="4" width="1" height="1" fill="#000"/><rect x="9" y="4" width="1" height="1" fill="#fff"/><rect x="10" y="4" width="1" height="1" fill="#000"/><rect x="11" y="4" width="3" height="1" fill="#fff"/><rect x="14" y="4" width="2" height="1" fill="#000080"/><rect x="0" y="5" width="1" height="1" fill="#000"/><rect x="1" y="5" width="2" height="1" fill="#fff"/><rect x="3" y="5" width="1" height="1" fill="#000"/><rect x="4" y="5" width="1" height="1" fill="#fff"/><rect x="5" y="5" width="1" height="1" fill="#000"/><rect x="6" y="5" width="1" height="1" fill="#fff"/><rect x="7" y="5" width="1" height="1" fill="#000"/><rect x="8" y="5" width="1" height="1" fill="#fff"/><rect x="9" y="5" width="1" height="1" fill="#000"/><rect x="10" y="5" width="1" height="1" fill="#fff"/><rect x="11" y="5" width="1" height="1" fill="#000"/><rect x="12" y="5" width="1" height="1" fill="#fff"/><rect x="13" y="5" width="1" height="1" fill="#000"/><rect x="14" y="5" width="2" height="1" fill="#000080"/><rect x="0" y="6" width="1" height="1" fill="#000"/><rect x="1" y="6" width="3" height="1" fill="#fff"/><rect x="4" y="6" width="1" height="1" fill="#000"/><rect x="5" y="6" width="1" height="1" fill="#fff"/><rect x="6" y="6" width="1" height="1" fill="#000"/><rect x="7" y="6" width="1" height="1" fill="#fff"/><rect x="8" y="6" width="1" height="1" fill="#000"/><rect x="9" y="6" width="1" height="1" fill="#fff"/><rect x="10" y="6" width="3" height="1" fill="#000"/><rect x="14" y="6" width="2" height="1" fill="#000080"/><rect x="0" y="7" width="1" height="1" fill="#000"/><rect x="1" y="7" width="4" height="1" fill="#fff"/><rect x="5" y="7" width="1" height="1" fill="#000"/><rect x="6" y="7" width="1" height="1" fill="#fff"/><rect x="7" y="7" width="1" height="1" fill="#000"/><rect x="8" y="7" width="1" height="1" fill="#fff"/><rect x="9" y="7" width="3" height="1" fill="#000"/><rect x="15" y="7" width="1" height="1" fill="#000080"/><rect x="0" y="8" width="1" height="1" fill="#000"/><rect x="1" y="8" width="6" height="1" fill="#fff"/><rect x="7" y="8" width="1" height="1" fill="#000"/><rect x="8" y="8" width="3" height="1" fill="#fff"/><rect x="11" y="8" width="1" height="1" fill="#000"/><rect x="0" y="9" width="1" height="1" fill="#000"/><rect x="1" y="9" width="10" height="1" fill="#fff"/><rect x="11" y="9" width="1" height="1" fill="#000"/><rect x="0" y="10" width="1" height="1" fill="#000"/><rect x="1" y="10" width="1" height="1" fill="#fff"/><rect x="2" y="10" width="2" height="1" fill="#000"/><rect x="4" y="10" width="1" height="1" fill="#fff"/><rect x="5" y="10" width="5" height="1" fill="#000"/><rect x="10" y="10" width="1" height="1" fill="#fff"/><rect x="11" y="10" width="1" height="1" fill="#000"/><rect x="0" y="11" width="1" height="1" fill="#000"/><rect x="1" y="11" width="10" height="1" fill="#fff"/><rect x="11" y="11" width="1" height="1" fill="#000"/><rect x="0" y="12" width="1" height="1" fill="#000"/><rect x="1" y="12" width="1" height="1" fill="#fff"/><rect x="2" y="12" width="2" height="1" fill="#000"/><rect x="4" y="12" width="1" height="1" fill="#fff"/><rect x="5" y="12" width="5" height="1" fill="#000"/><rect x="10" y="12" width="1" height="1" fill="#fff"/><rect x="11" y="12" width="1" height="1" fill="#000"/><rect x="0" y="13" width="1" height="1" fill="#000"/><rect x="1" y="13" width="10" height="1" fill="#fff"/><rect x="11" y="13" width="1" height="1" fill="#000"/><rect x="0" y="14" width="12" height="1" fill="#000"/></svg></div></div>
<div style="position:absolute;left:386px;top:50px;width:22px;height:28px;box-sizing:border-box;border:1px solid #d4d0c8;border-color:#808080 #fff #fff #808080;"><div style="position:absolute;left:3px;top:6px;width:16px;height:16px"><svg width="16" height="16" viewBox="0 0 16 16" shape-rendering="crispEdges" style="display:block;overflow:visible"><rect x="6" y="0" width="9" height="1" fill="#808080"/><rect x="15" y="0" width="1" height="1" fill="#000"/><rect x="5" y="1" width="2" height="1" fill="#808080"/><rect x="7" y="1" width="1" height="1" fill="#ffff00"/><rect x="8" y="1" width="1" height="1" fill="#fff"/><rect x="9" y="1" width="1" height="1" fill="#ffff00"/><rect x="10" y="1" width="3" height="1" fill="#fff"/><rect x="13" y="1" width="1" height="1" fill="#ffff00"/><rect x="14" y="1" width="1" height="1" fill="#fff"/><rect x="15" y="1" width="1" height="1" fill="#000"/><rect x="4" y="2" width="1" height="1" fill="#808080"/><rect x="5" y="2" width="1" height="1" fill="#00ffff"/><rect x="6" y="2" width="1" height="1" fill="#808080"/><rect x="7" y="2" width="2" height="1" fill="#fff"/><rect x="9" y="2" width="5" height="1" fill="#808080"/><rect x="14" y="2" width="1" height="1" fill="#fff"/><rect x="15" y="2" width="1" height="1" fill="#000"/><rect x="3" y="3" width="1" height="1" fill="#808080"/><rect x="4" y="3" width="1" height="1" fill="#00ffff"/><rect x="5" y="3" width="1" height="1" fill="#fff"/><rect x="6" y="3" width="1" height="1" fill="#808080"/><rect x="7" y="3" width="1" height="1" fill="#ffff00"/><rect x="8" y="3" width="1" height="1" fill="#fff"/><rect x="9" y="3" width="1" height="1" fill="#ffff00"/><rect x="10" y="3" width="3" height="1" fill="#fff"/><rect x="13" y="3" width="1" height="1" fill="#ffff00"/><rect x="14" y="3" width="1" height="1" fill="#fff"/><rect x="15" y="3" width="1" height="1" fill="#000"/><rect x="2" y="4" width="1" height="1" fill="#808080"/><rect x="3" y="4" width="1" height="1" fill="#00ffff"/><rect x="4" y="4" width="1" height="1" fill="#fff"/><rect x="5" y="4" width="1" height="1" fill="#00ffff"/><rect x="6" y="4" width="1" height="1" fill="#808080"/><rect x="7" y="4" width="2" height="1" fill="#fff"/><rect x="9" y="4" width="5" height="1" fill="#808080"/><rect x="14" y="4" width="1" height="1" fill="#fff"/><rect x="15" y="4" width="1" height="1" fill="#000"/><rect x="1" y="5" width="1" height="1" fill="#808080"/><rect x="2" y="5" width="1" height="1" fill="#00ffff"/><rect x="3" y="5" width="1" height="1" fill="#fff"/><rect x="4" y="5" width="1" height="1" fill="#00ffff"/><rect x="5" y="5" width="1" height="1" fill="#fff"/><rect x="6" y="5" width="1" height="1" fill="#808080"/><rect x="7" y="5" width="1" height="1" fill="#ffff00"/><rect x="8" y="5" width="1" height="1" fill="#fff"/><rect x="9" y="5" width="1" height="1" fill="#ffff00"/><rect x="10" y="5" width="3" height="1" fill="#fff"/><rect x="13" y="5" width="1" height="1" fill="#ffff00"/><rect x="14" y="5" width="1" height="1" fill="#fff"/><rect x="15" y="5" width="1" height="1" fill="#000"/><rect x="0" y="6" width="1" height="1" fill="#808080"/><rect x="1" y="6" width="1" height="1" fill="#fff"/><rect x="2" y="6" width="1" height="1" fill="#00ffff"/><rect x="3" y="6" width="1" height="1" fill="#fff"/><rect x="4" y="6" width="1" height="1" fill="#00ffff"/><rect x="5" y="6" width="1" height="1" fill="#fff"/><rect x="6" y="6" width="1" height="1" fill="#808080"/><rect x="7" y="6" width="2" height="1" fill="#fff"/><rect x="9" y="6" width="5" height="1" fill="#808080"/><rect x="14" y="6" width="1" height="1" fill="#fff"/><rect x="15" y="6" width="1" height="1" fill="#000"/><rect x="0" y="7" width="1" height="1" fill="#808080"/><rect x="1" y="7" width="2" height="1" fill="#fff"/><rect x="3" y="7" width="1" height="1" fill="#00ffff"/><rect x="4" y="7" width="1" height="1" fill="#fff"/><rect x="5" y="7" width="1" height="1" fill="#00ffff"/><rect x="6" y="7" width="1" height="1" fill="#808080"/><rect x="7" y="7" width="1" height="1" fill="#ffff00"/><rect x="8" y="7" width="1" height="1" fill="#fff"/><rect x="9" y="7" width="1" height="1" fill="#ffff00"/><rect x="10" y="7" width="3" height="1" fill="#fff"/><rect x="13" y="7" width="1" height="1" fill="#ffff00"/><rect x="14" y="7" width="1" height="1" fill="#fff"/><rect x="15" y="7" width="1" height="1" fill="#000"/><rect x="0" y="8" width="1" height="1" fill="#808080"/><rect x="1" y="8" width="3" height="1" fill="#fff"/><rect x="4" y="8" width="1" height="1" fill="#00ffff"/><rect x="5" y="8" width="1" height="1" fill="#fff"/><rect x="6" y="8" width="1" height="1" fill="#808080"/><rect x="7" y="8" width="2" height="1" fill="#fff"/><rect x="9" y="8" width="5" height="1" fill="#808080"/><rect x="14" y="8" width="1" height="1" fill="#fff"/><rect x="15" y="8" width="1" height="1" fill="#000"/><rect x="0" y="9" width="1" height="1" fill="#808080"/><rect x="1" y="9" width="4" height="1" fill="#fff"/><rect x="5" y="9" width="2" height="1" fill="#808080"/><rect x="7" y="9" width="1" height="1" fill="#ffff00"/><rect x="8" y="9" width="1" height="1" fill="#fff"/><rect x="9" y="9" width="1" height="1" fill="#ffff00"/><rect x="10" y="9" width="3" height="1" fill="#fff"/><rect x="13" y="9" width="1" height="1" fill="#ffff00"/><rect x="14" y="9" width="1" height="1" fill="#fff"/><rect x="15" y="9" width="1" height="1" fill="#000"/><rect x="0" y="10" width="1" height="1" fill="#808080"/><rect x="1" y="10" width="3" height="1" fill="#fff"/><rect x="4" y="10" width="1" height="1" fill="#808080"/><rect x="5" y="10" width="1" height="1" fill="#fff"/><rect x="6" y="10" width="1" height="1" fill="#808080"/><rect x="7" y="10" width="1" height="1" fill="#ffff00"/><rect x="8" y="10" width="1" height="1" fill="#fff"/><rect x="9" y="10" width="1" height="1" fill="#ffff00"/><rect x="10" y="10" width="1" height="1" fill="#fff"/><rect x="11" y="10" width="1" height="1" fill="#ffff00"/><rect x="12" y="10" width="1" height="1" fill="#fff"/><rect x="13" y="10" width="1" height="1" fill="#ffff00"/><rect x="14" y="10" width="1" height="1" fill="#fff"/><rect x="15" y="10" width="1" height="1" fill="#000"/><rect x="0" y="11" width="1" height="1" fill="#808080"/><rect x="1" y="11" width="2" height="1" fill="#fff"/><rect x="3" y="11" width="1" height="1" fill="#808080"/><rect x="4" y="11" width="2" height="1" fill="#fff"/><rect x="6" y="11" width="10" height="1" fill="#000"/><rect x="0" y="12" width="1" height="1" fill="#808080"/><rect x="1" y="12" width="1" height="1" fill="#fff"/><rect x="2" y="12" width="1" height="1" fill="#808080"/><rect x="3" y="12" width="8" height="1" fill="#fff"/><rect x="11" y="12" width="1" height="1" fill="#808080"/><rect x="12" y="12" width="1" height="1" fill="#fff"/><rect x="13" y="12" width="1" height="1" fill="#000"/><rect x="0" y="13" width="2" height="1" fill="#808080"/><rect x="2" y="13" width="10" height="1" fill="#fff"/><rect x="12" y="13" width="1" height="1" fill="#808080"/><rect x="13" y="13" width="1" height="1" fill="#000"/><rect x="0" y="14" width="1" height="1" fill="#808080"/><rect x="1" y="14" width="12" height="1" fill="#fff"/><rect x="13" y="14" width="1" height="1" fill="#000"/><rect x="0" y="15" width="14" height="1" fill="#000"/></svg></div></div>
<div style="position:absolute;left:408px;top:50px;width:22px;height:28px;box-sizing:border-box;border:1px solid #d4d0c8;border-color:#808080 #fff #fff #808080;"><div style="position:absolute;left:3px;top:6px;width:16px;height:16px"><svg width="16" height="16" viewBox="0 0 16 16" style="display:block;overflow:visible"><defs><pattern id="yd" width="2" height="2" patternUnits="userSpaceOnUse"><rect width="2" height="2" fill="#ffff00"/><rect width="1" height="1" fill="#fff"/><rect x="1" y="1" width="1" height="1" fill="#fff"/></pattern></defs><polygon points="5.8,0.7 15.8,4.6 15.6,6.4 9,14.6 7.4,14.2 0.5,10.4 0.5,9.2" fill="url(#yd)"/><polygon points="3.2,11.4 7,10 9.4,12.2 6,13.4" fill="#fff"/><path d="M15.4 5.2L9.2 14.2" fill="none" stroke="#000" stroke-width="1.1" stroke-dasharray="1.4 1.2"/><path d="M0.6 10.4L4 12.2M5 13 7.4 14.2 9 14.5" fill="none" stroke="#000" stroke-width="1"/><path d="M5.8 .8 4 3.4" stroke="#b0b0b0" stroke-width=".7"/><ellipse cx="8.4" cy="6.2" rx="1.5" ry="1" fill="#000"/><rect x="10" y="6" width="1" height="4" fill="#000"/><path d="M9 1h3.4v3.2l1 1.6H8l1-1.6z" fill="#0000ff"/><rect x="9" y="0.4" width="3.4" height="0.8" fill="#000"/><rect x="13" y="3" width="2" height="1" fill="#000"/></svg></div></div>
<div style="position:absolute;left:430px;top:50px;width:12px;height:28px;box-sizing:border-box;border:1px solid #d4d0c8"><div style="position:absolute;left:4px;top:4px;width:1px;height:19px;background:#808080"></div><div style="position:absolute;left:5px;top:4px;width:1px;height:19px;background:#fff"></div></div>
<div style="position:absolute;left:442px;top:50px;width:22px;height:28px;box-sizing:border-box;border:1px solid #d4d0c8;"><div style="position:absolute;left:2px;top:5px;width:16px;height:16px"><svg width="16" height="16" viewBox="0 0 16 16" shape-rendering="crispEdges" style="display:block;overflow:visible"><rect x="1" y="1" width="8" height="1" fill="#000"/><rect x="1" y="2" width="2" height="1" fill="#000"/><rect x="3" y="2" width="5" height="1" fill="#fff"/><rect x="8" y="2" width="1" height="1" fill="#000"/><rect x="1" y="3" width="1" height="1" fill="#000"/><rect x="2" y="3" width="1" height="1" fill="#808000"/><rect x="3" y="3" width="1" height="1" fill="#000"/><rect x="4" y="3" width="4" height="1" fill="#fff"/><rect x="8" y="3" width="1" height="1" fill="#000"/><rect x="13" y="3" width="1" height="1" fill="#000080"/><rect x="1" y="4" width="1" height="1" fill="#000"/><rect x="2" y="4" width="2" height="1" fill="#808000"/><rect x="4" y="4" width="1" height="1" fill="#000"/><rect x="5" y="4" width="3" height="1" fill="#fff"/><rect x="8" y="4" width="1" height="1" fill="#000"/><rect x="12" y="4" width="2" height="1" fill="#000080"/><rect x="1" y="5" width="1" height="1" fill="#000"/><rect x="2" y="5" width="3" height="1" fill="#808000"/><rect x="5" y="5" width="1" height="1" fill="#000"/><rect x="6" y="5" width="2" height="1" fill="#fff"/><rect x="8" y="5" width="1" height="1" fill="#000"/><rect x="11" y="5" width="5" height="1" fill="#000080"/><rect x="1" y="6" width="1" height="1" fill="#000"/><rect x="2" y="6" width="3" height="1" fill="#808000"/><rect x="5" y="6" width="1" height="1" fill="#000"/><rect x="6" y="6" width="2" height="1" fill="#fff"/><rect x="8" y="6" width="1" height="1" fill="#000"/><rect x="10" y="6" width="6" height="1" fill="#000080"/><rect x="1" y="7" width="1" height="1" fill="#000"/><rect x="2" y="7" width="3" height="1" fill="#808000"/><rect x="5" y="7" width="1" height="1" fill="#000"/><rect x="6" y="7" width="2" height="1" fill="#fff"/><rect x="8" y="7" width="1" height="1" fill="#000"/><rect x="11" y="7" width="5" height="1" fill="#000080"/><rect x="1" y="8" width="1" height="1" fill="#000"/><rect x="2" y="8" width="3" height="1" fill="#808000"/><rect x="5" y="8" width="1" height="1" fill="#000"/><rect x="6" y="8" width="2" height="1" fill="#fff"/><rect x="8" y="8" width="1" height="1" fill="#000"/><rect x="12" y="8" width="2" height="1" fill="#000080"/><rect x="1" y="9" width="1" height="1" fill="#000"/><rect x="2" y="9" width="2" height="1" fill="#808000"/><rect x="4" y="9" width="2" height="1" fill="#000"/><rect x="6" y="9" width="2" height="1" fill="#fff"/><rect x="8" y="9" width="1" height="1" fill="#000"/><rect x="13" y="9" width="1" height="1" fill="#000080"/><rect x="1" y="10" width="1" height="1" fill="#000"/><rect x="2" y="10" width="3" height="1" fill="#808000"/><rect x="5" y="10" width="1" height="1" fill="#000"/><rect x="6" y="10" width="2" height="1" fill="#fff"/><rect x="8" y="10" width="1" height="1" fill="#000"/><rect x="0" y="11" width="2" height="1" fill="#000"/><rect x="2" y="11" width="3" height="1" fill="#808000"/><rect x="5" y="11" width="8" height="1" fill="#000"/><rect x="2" y="12" width="1" height="1" fill="#000"/><rect x="3" y="12" width="2" height="1" fill="#808000"/><rect x="5" y="12" width="1" height="1" fill="#000"/><rect x="3" y="13" width="1" height="1" fill="#000"/><rect x="4" y="13" width="1" height="1" fill="#808000"/><rect x="5" y="13" width="1" height="1" fill="#000"/><rect x="4" y="14" width="2" height="1" fill="#000"/><rect x="5" y="15" width="1" height="1" fill="#000"/></svg></div></div>
<div style="position:absolute;left:464px;top:50px;width:12px;height:28px;box-sizing:border-box;border:1px solid #d4d0c8"><div style="position:absolute;left:4px;top:4px;width:1px;height:19px;background:#808080"></div><div style="position:absolute;left:5px;top:4px;width:1px;height:19px;background:#fff"></div></div>
<div style="position:absolute;left:5px;top:82px;width:1663px;height:1px;background:#d4d0c8;"></div>
<div style="position:absolute;left:5px;top:106px;width:1663px;height:1px;background:#d4d0c8;"></div>
<div style="position:absolute;left:5px;top:82px;width:22px;height:25px;box-sizing:border-box;border:1px solid #d4d0c8;"><div style="position:absolute;left:2px;top:3px;width:16px;height:16px"><svg width="16" height="16" viewBox="0 0 16 16" shape-rendering="crispEdges" style="display:block;overflow:visible"><rect x="0" y="2" width="6" height="1" fill="#000"/><rect x="0" y="3" width="1" height="1" fill="#000"/><rect x="1" y="3" width="4" height="1" fill="#fff"/><rect x="5" y="3" width="2" height="1" fill="#000"/><rect x="0" y="4" width="1" height="1" fill="#000"/><rect x="1" y="4" width="4" height="1" fill="#fff"/><rect x="5" y="4" width="1" height="1" fill="#000"/><rect x="6" y="4" width="1" height="1" fill="#fff"/><rect x="7" y="4" width="1" height="1" fill="#000"/><rect x="0" y="5" width="1" height="1" fill="#000"/><rect x="1" y="5" width="1" height="1" fill="#fff"/><rect x="2" y="5" width="2" height="1" fill="#000"/><rect x="4" y="5" width="2" height="1" fill="#fff"/><rect x="6" y="5" width="6" height="1" fill="#000080"/><rect x="0" y="6" width="1" height="1" fill="#000"/><rect x="1" y="6" width="5" height="1" fill="#fff"/><rect x="6" y="6" width="1" height="1" fill="#000080"/><rect x="7" y="6" width="4" height="1" fill="#fff"/><rect x="11" y="6" width="2" height="1" fill="#000080"/><rect x="0" y="7" width="1" height="1" fill="#000"/><rect x="1" y="7" width="1" height="1" fill="#fff"/><rect x="2" y="7" width="4" height="1" fill="#000"/><rect x="6" y="7" width="1" height="1" fill="#000080"/><rect x="7" y="7" width="4" height="1" fill="#fff"/><rect x="11" y="7" width="1" height="1" fill="#000080"/><rect x="12" y="7" width="1" height="1" fill="#fff"/><rect x="13" y="7" width="1" height="1" fill="#000080"/><rect x="0" y="8" width="1" height="1" fill="#000"/><rect x="1" y="8" width="5" height="1" fill="#fff"/><rect x="6" y="8" width="1" height="1" fill="#000080"/><rect x="7" y="8" width="1" height="1" fill="#fff"/><rect x="8" y="8" width="3" height="1" fill="#000"/><rect x="11" y="8" width="4" height="1" fill="#000080"/><rect x="0" y="9" width="1" height="1" fill="#000"/><rect x="1" y="9" width="1" height="1" fill="#fff"/><rect x="2" y="9" width="4" height="1" fill="#000"/><rect x="6" y="9" width="1" height="1" fill="#000080"/><rect x="7" y="9" width="7" height="1" fill="#fff"/><rect x="14" y="9" width="1" height="1" fill="#000080"/><rect x="0" y="10" width="1" height="1" fill="#000"/><rect x="1" y="10" width="5" height="1" fill="#fff"/><rect x="6" y="10" width="1" height="1" fill="#000080"/><rect x="7" y="10" width="1" height="1" fill="#fff"/><rect x="8" y="10" width="5" height="1" fill="#000"/><rect x="13" y="10" width="1" height="1" fill="#fff"/><rect x="14" y="10" width="1" height="1" fill="#000080"/><rect x="0" y="11" width="6" height="1" fill="#000"/><rect x="6" y="11" width="1" height="1" fill="#000080"/><rect x="7" y="11" width="7" height="1" fill="#fff"/><rect x="14" y="11" width="1" height="1" fill="#000080"/><rect x="6" y="12" width="1" height="1" fill="#000080"/><rect x="7" y="12" width="1" height="1" fill="#fff"/><rect x="8" y="12" width="5" height="1" fill="#000"/><rect x="13" y="12" width="1" height="1" fill="#fff"/><rect x="14" y="12" width="1" height="1" fill="#000080"/><rect x="6" y="13" width="1" height="1" fill="#000080"/><rect x="7" y="13" width="7" height="1" fill="#fff"/><rect x="14" y="13" width="1" height="1" fill="#000080"/><rect x="6" y="14" width="9" height="1" fill="#000080"/></svg></div></div>
<div style="position:absolute;left:27px;top:82px;width:22px;height:25px;box-sizing:border-box;border:1px solid #d4d0c8;"><div style="position:absolute;left:2px;top:3px;width:16px;height:16px"><svg width="16" height="16" viewBox="0 0 16 16" style="display:block;overflow:visible"><path d="M5 2.2l1.3-.4 3.4 7-1.6 1.2z" fill="#000"/><path d="M1.3 5.2q1.2 2.6 4 3.4l3 1.2" fill="none" stroke="#000" stroke-width="1.5"/><path d="M7 8.2l2.6-.8 2 2.6-1.4 1.6-2 .6-.8-2z" fill="#000"/><rect x="8" y="9" width="1" height="1" fill="#fff"/><ellipse cx="12.8" cy="11" rx="2.1" ry="1.5" fill="#f0f0d0" stroke="#000080" stroke-width="1.2" transform="rotate(-30 12.8 11)"/><ellipse cx="8.9" cy="14.1" rx="2.1" ry="1.4" fill="#f0f0d0" stroke="#000080" stroke-width="1.2" transform="rotate(-35 8.9 14.1)"/></svg></div></div>
<div style="position:absolute;left:49px;top:82px;width:22px;height:25px;box-sizing:border-box;border:1px solid #d4d0c8;"><div style="position:absolute;left:2px;top:3px;width:16px;height:16px"><svg width="16" height="16" viewBox="0 0 16 16" shape-rendering="crispEdges" style="display:block;overflow:visible"><rect x="5" y="2" width="4" height="1" fill="#000"/><rect x="0" y="3" width="5" height="1" fill="#000"/><rect x="5" y="3" width="1" height="1" fill="#fff"/><rect x="6" y="3" width="2" height="1" fill="#ffff80"/><rect x="8" y="3" width="1" height="1" fill="#fff"/><rect x="9" y="3" width="5" height="1" fill="#000"/><rect x="0" y="4" width="1" height="1" fill="#000"/><rect x="1" y="4" width="1" height="1" fill="#008080"/><rect x="2" y="4" width="1" height="1" fill="#c0c0c0"/><rect x="3" y="4" width="1" height="1" fill="#000"/><rect x="4" y="4" width="6" height="1" fill="#fff"/><rect x="10" y="4" width="1" height="1" fill="#000"/><rect x="11" y="4" width="1" height="1" fill="#c0c0c0"/><rect x="12" y="4" width="1" height="1" fill="#008080"/><rect x="13" y="4" width="1" height="1" fill="#000"/><rect x="0" y="5" width="1" height="1" fill="#000"/><rect x="1" y="5" width="1" height="1" fill="#c0c0c0"/><rect x="2" y="5" width="1" height="1" fill="#008080"/><rect x="3" y="5" width="8" height="1" fill="#000"/><rect x="11" y="5" width="1" height="1" fill="#008080"/><rect x="12" y="5" width="1" height="1" fill="#c0c0c0"/><rect x="13" y="5" width="1" height="1" fill="#000"/><rect x="0" y="6" width="1" height="1" fill="#000"/><rect x="1" y="6" width="1" height="1" fill="#008080"/><rect x="2" y="6" width="1" height="1" fill="#c0c0c0"/><rect x="3" y="6" width="1" height="1" fill="#008080"/><rect x="4" y="6" width="1" height="1" fill="#c0c0c0"/><rect x="5" y="6" width="1" height="1" fill="#008080"/><rect x="6" y="6" width="1" height="1" fill="#c0c0c0"/><rect x="7" y="6" width="1" height="1" fill="#008080"/><rect x="8" y="6" width="1" height="1" fill="#c0c0c0"/><rect x="9" y="6" width="1" height="1" fill="#008080"/><rect x="10" y="6" width="1" height="1" fill="#c0c0c0"/><rect x="11" y="6" width="1" height="1" fill="#008080"/><rect x="12" y="6" width="1" height="1" fill="#c0c0c0"/><rect x="13" y="6" width="1" height="1" fill="#000"/><rect x="0" y="7" width="1" height="1" fill="#000"/><rect x="1" y="7" width="1" height="1" fill="#c0c0c0"/><rect x="2" y="7" width="1" height="1" fill="#008080"/><rect x="3" y="7" width="1" height="1" fill="#c0c0c0"/><rect x="4" y="7" width="1" height="1" fill="#008080"/><rect x="5" y="7" width="1" height="1" fill="#c0c0c0"/><rect x="6" y="7" width="1" height="1" fill="#008080"/><rect x="7" y="7" width="1" height="1" fill="#c0c0c0"/><rect x="8" y="7" width="1" height="1" fill="#008080"/><rect x="9" y="7" width="1" height="1" fill="#c0c0c0"/><rect x="10" y="7" width="1" height="1" fill="#008080"/><rect x="11" y="7" width="1" height="1" fill="#c0c0c0"/><rect x="12" y="7" width="1" height="1" fill="#008080"/><rect x="13" y="7" width="1" height="1" fill="#000"/><rect x="0" y="8" width="1" height="1" fill="#000"/><rect x="1" y="8" width="1" height="1" fill="#008080"/><rect x="2" y="8" width="1" height="1" fill="#c0c0c0"/><rect x="3" y="8" width="1" height="1" fill="#008080"/><rect x="4" y="8" width="1" height="1" fill="#c0c0c0"/><rect x="5" y="8" width="1" height="1" fill="#008080"/><rect x="6" y="8" width="1" height="1" fill="#c0c0c0"/><rect x="7" y="8" width="6" height="1" fill="#000080"/><rect x="13" y="8" width="1" height="1" fill="#000"/><rect x="0" y="9" width="1" height="1" fill="#000"/><rect x="1" y="9" width="1" height="1" fill="#c0c0c0"/><rect x="2" y="9" width="1" height="1" fill="#008080"/><rect x="3" y="9" width="1" height="1" fill="#c0c0c0"/><rect x="4" y="9" width="1" height="1" fill="#008080"/><rect x="5" y="9" width="1" height="1" fill="#c0c0c0"/><rect x="6" y="9" width="1" height="1" fill="#008080"/><rect x="7" y="9" width="1" height="1" fill="#000080"/><rect x="8" y="9" width="4" height="1" fill="#fff"/><rect x="12" y="9" width="2" height="1" fill="#000080"/><rect x="0" y="10" width="1" height="1" fill="#000"/><rect x="1" y="10" width="1" height="1" fill="#008080"/><rect x="2" y="10" width="1" height="1" fill="#c0c0c0"/><rect x="3" y="10" width="1" height="1" fill="#008080"/><rect x="4" y="10" width="1" height="1" fill="#c0c0c0"/><rect x="5" y="10" width="1" height="1" fill="#008080"/><rect x="6" y="10" width="1" height="1" fill="#c0c0c0"/><rect x="7" y="10" width="1" height="1" fill="#000080"/><rect x="8" y="10" width="4" height="1" fill="#fff"/><rect x="12" y="10" width="1" height="1" fill="#000080"/><rect x="13" y="10" width="1" height="1" fill="#fff"/><rect x="14" y="10" width="1" height="1" fill="#000080"/><rect x="0" y="11" width="1" height="1" fill="#000"/><rect x="1" y="11" width="1" height="1" fill="#c0c0c0"/><rect x="2" y="11" width="1" height="1" fill="#008080"/><rect x="3" y="11" width="1" height="1" fill="#c0c0c0"/><rect x="4" y="11" width="1" height="1" fill="#008080"/><rect x="5" y="11" width="1" height="1" fill="#c0c0c0"/><rect x="6" y="11" width="1" height="1" fill="#008080"/><rect x="7" y="11" width="1" height="1" fill="#000080"/><rect x="8" y="11" width="1" height="1" fill="#fff"/><rect x="9" y="11" width="7" height="1" fill="#000080"/><rect x="0" y="12" width="1" height="1" fill="#000"/><rect x="1" y="12" width="1" height="1" fill="#008080"/><rect x="2" y="12" width="1" height="1" fill="#c0c0c0"/><rect x="3" y="12" width="1" height="1" fill="#008080"/><rect x="4" y="12" width="1" height="1" fill="#c0c0c0"/><rect x="5" y="12" width="1" height="1" fill="#008080"/><rect x="6" y="12" width="1" height="1" fill="#c0c0c0"/><rect x="7" y="12" width="1" height="1" fill="#000080"/><rect x="8" y="12" width="7" height="1" fill="#fff"/><rect x="15" y="12" width="1" height="1" fill="#000080"/><rect x="0" y="13" width="1" height="1" fill="#000"/><rect x="1" y="13" width="1" height="1" fill="#c0c0c0"/><rect x="2" y="13" width="1" height="1" fill="#008080"/><rect x="3" y="13" width="1" height="1" fill="#c0c0c0"/><rect x="4" y="13" width="1" height="1" fill="#008080"/><rect x="5" y="13" width="1" height="1" fill="#c0c0c0"/><rect x="6" y="13" width="1" height="1" fill="#008080"/><rect x="7" y="13" width="1" height="1" fill="#000080"/><rect x="8" y="13" width="1" height="1" fill="#fff"/><rect x="9" y="13" width="5" height="1" fill="#000080"/><rect x="14" y="13" width="1" height="1" fill="#fff"/><rect x="15" y="13" width="1" height="1" fill="#000080"/><rect x="0" y="14" width="7" height="1" fill="#000"/><rect x="7" y="14" width="1" height="1" fill="#000080"/><rect x="8" y="14" width="7" height="1" fill="#fff"/><rect x="15" y="14" width="1" height="1" fill="#000080"/><rect x="7" y="15" width="9" height="1" fill="#000080"/></svg></div></div>
<div style="position:absolute;left:71px;top:82px;width:22px;height:25px;box-sizing:border-box;border:1px solid #d4d0c8;"><div style="position:absolute;left:2px;top:3px;width:16px;height:16px"><svg width="16" height="16" viewBox="0 0 16 16" shape-rendering="crispEdges" style="display:block;overflow:visible"><rect x="1.5" y="2.5" width="5" height="3" fill="#fff" stroke="#000"/><rect x="1.5" y="8.5" width="5" height="3" fill="#fff" stroke="#000"/><rect x="1.5" y="11.5" width="5" height="3" fill="#fff" stroke="#000"/><rect x="3" y="6" width="1" height="2" fill="#000"/><rect x="6.5" y="5.5" width="4" height="3" fill="#80ffff" stroke="#000"/><rect x="11" y="6" width="3" height="2" fill="#000080"/><polygon points="13,4 16,7 13,10" fill="#000080"/></svg></div></div>
<div style="position:absolute;left:93px;top:82px;width:22px;height:25px;box-sizing:border-box;border:1px solid #d4d0c8;"><div style="position:absolute;left:2px;top:3px;width:16px;height:16px"><svg width="16" height="16" viewBox="0 0 16 16" shape-rendering="crispEdges" style="display:block;overflow:visible"><rect x="0" y="1" width="7" height="5" fill="#000"/><rect x="0" y="2" width="6" height="3" fill="#d070ff"/><rect x="0" y="11" width="7" height="5" fill="#000"/><rect x="0" y="12" width="6" height="3" fill="#fff"/><rect x="11.5" y="6.5" width="4" height="4" fill="#80ffff" stroke="#000"/><rect x="8" y="8" width="3" height="1" fill="#000080"/><polygon points="9,5.5 6,8.5 9,11.5" fill="#000080"/></svg></div></div>
<div style="position:absolute;left:115px;top:82px;width:22px;height:25px;box-sizing:border-box;border:1px solid #d4d0c8;"><div style="position:absolute;left:2px;top:3px;width:16px;height:16px"><svg width="16" height="16" viewBox="0 0 16 16" shape-rendering="crispEdges" style="display:block;overflow:visible"><rect x="0" y="1" width="7" height="5" fill="#000"/><rect x="0" y="2" width="6" height="3" fill="#fff"/><rect x="0" y="11" width="7" height="5" fill="#000"/><rect x="0" y="12" width="6" height="3" fill="#d070ff"/><rect x="11.5" y="6.5" width="4" height="4" fill="#80ffff" stroke="#000"/><rect x="8" y="8" width="3" height="1" fill="#000080"/><polygon points="9,5.5 6,8.5 9,11.5" fill="#000080"/></svg></div></div>
<div style="position:absolute;left:137px;top:82px;width:12px;height:25px;box-sizing:border-box;border:1px solid #d4d0c8"><div style="position:absolute;left:4px;top:2px;width:1px;height:19px;background:#808080"></div><div style="position:absolute;left:5px;top:2px;width:1px;height:19px;background:#fff"></div></div>
<div style="position:absolute;left:2px;top:108px;width:1666px;height:1px;background:#808080;"></div>
<div style="position:absolute;left:2px;top:109px;width:1666px;height:1px;background:#fff;"></div>
<div style="position:absolute;left:0px;top:19px;width:1px;height:1001px;background:#808080;"></div>
<div style="position:absolute;left:1px;top:20px;width:1px;height:1000px;background:#404040;"></div>
</div>
<div style="position:absolute;left:0px;top:109px;width:1px;height:911px;background:#808080;"></div>
<div style="position:absolute;left:1px;top:109px;width:1px;height:911px;background:#404040;"></div>
<div style="position:absolute;left:1662px;top:110px;width:6px;height:865px;background:repeating-conic-gradient(#d4d0c8 0 25%,#fff 0 50%) 0 0/2px 2px;"></div>
<div style="position:absolute;left:1662px;top:110px;width:6px;height:16px;background:#d4d0c8;box-shadow:inset 1px 1px 0 #d4d0c8,inset 2px 2px 0 #fff,inset 0 -1px 0 #404040,inset 0 -2px 0 #808080"></div>
<div style="position:absolute;left:1662px;top:126px;width:6px;height:172px;background:#d4d0c8;box-shadow:inset 1px 1px 0 #d4d0c8,inset 2px 2px 0 #fff,inset 0 -1px 0 #404040,inset 0 -2px 0 #808080"></div>
<svg style="position:absolute;left:1665px;top:117px" width="3" height="3" viewBox="0 0 3 3"><path d="M3 0 0 3h3z" fill="#000"/></svg>
<div style='position:absolute;left:2px;top:975px;width:75px;height:28px;box-sizing:border-box;border:1px solid #000080;background:#fff'><div style="position:absolute;left:5px;top:5px;width:16px;height:16px"><svg width="16" height="16" viewBox="0 0 16 16" shape-rendering="crispEdges" style="display:block;overflow:visible"><rect x="2" y="0" width="1" height="1" fill="#000"/><rect x="1" y="1" width="1" height="1" fill="#000"/><rect x="2" y="1" width="1" height="1" fill="#fff"/><rect x="3" y="1" width="1" height="1" fill="#000"/><rect x="0" y="2" width="1" height="1" fill="#000"/><rect x="1" y="2" width="2" height="1" fill="#fff"/><rect x="3" y="2" width="1" height="1" fill="#808080"/><rect x="4" y="2" width="1" height="1" fill="#000"/><rect x="9" y="2" width="3" height="1" fill="#808080"/><rect x="0" y="3" width="1" height="1" fill="#000"/><rect x="1" y="3" width="1" height="1" fill="#e00000"/><rect x="2" y="3" width="2" height="1" fill="#fff"/><rect x="4" y="3" width="1" height="1" fill="#808080"/><rect x="5" y="3" width="1" height="1" fill="#000"/><rect x="7" y="3" width="2" height="1" fill="#808080"/><rect x="9" y="3" width="2" height="1" fill="#fff"/><rect x="11" y="3" width="1" height="1" fill="#808080"/><rect x="0" y="4" width="1" height="1" fill="#000"/><rect x="1" y="4" width="1" height="1" fill="#e00000"/><rect x="2" y="4" width="3" height="1" fill="#fff"/><rect x="5" y="4" width="1" height="1" fill="#808080"/><rect x="6" y="4" width="1" height="1" fill="#000"/><rect x="7" y="4" width="1" height="1" fill="#808080"/><rect x="8" y="4" width="1" height="1" fill="#fff"/><rect x="9" y="4" width="1" height="1" fill="#ffff00"/><rect x="10" y="4" width="1" height="1" fill="#fff"/><rect x="11" y="4" width="1" height="1" fill="#ffff00"/><rect x="12" y="4" width="1" height="1" fill="#000"/><rect x="0" y="5" width="1" height="1" fill="#000"/><rect x="1" y="5" width="1" height="1" fill="#e00000"/><rect x="2" y="5" width="4" height="1" fill="#fff"/><rect x="6" y="5" width="1" height="1" fill="#000"/><rect x="7" y="5" width="5" height="1" fill="#fff"/><rect x="12" y="5" width="1" height="1" fill="#000"/><rect x="13" y="5" width="1" height="1" fill="#e00000"/><rect x="14" y="5" width="1" height="1" fill="#000"/><rect x="0" y="6" width="1" height="1" fill="#000"/><rect x="1" y="6" width="1" height="1" fill="#e00000"/><rect x="2" y="6" width="4" height="1" fill="#fff"/><rect x="6" y="6" width="1" height="1" fill="#000"/><rect x="7" y="6" width="2" height="1" fill="#fff"/><rect x="9" y="6" width="1" height="1" fill="#ffff00"/><rect x="10" y="6" width="1" height="1" fill="#fff"/><rect x="11" y="6" width="1" height="1" fill="#ffff00"/><rect x="12" y="6" width="1" height="1" fill="#000"/><rect x="13" y="6" width="1" height="1" fill="#e00000"/><rect x="14" y="6" width="1" height="1" fill="#000"/><rect x="0" y="7" width="1" height="1" fill="#000"/><rect x="1" y="7" width="1" height="1" fill="#e00000"/><rect x="2" y="7" width="4" height="1" fill="#fff"/><rect x="6" y="7" width="1" height="1" fill="#000"/><rect x="7" y="7" width="5" height="1" fill="#fff"/><rect x="12" y="7" width="1" height="1" fill="#000"/><rect x="13" y="7" width="1" height="1" fill="#e00000"/><rect x="14" y="7" width="1" height="1" fill="#000"/><rect x="0" y="8" width="1" height="1" fill="#000"/><rect x="1" y="8" width="1" height="1" fill="#e00000"/><rect x="2" y="8" width="4" height="1" fill="#fff"/><rect x="6" y="8" width="1" height="1" fill="#000"/><rect x="7" y="8" width="2" height="1" fill="#fff"/><rect x="9" y="8" width="1" height="1" fill="#ffff00"/><rect x="10" y="8" width="1" height="1" fill="#fff"/><rect x="11" y="8" width="1" height="1" fill="#ffff00"/><rect x="12" y="8" width="1" height="1" fill="#000"/><rect x="13" y="8" width="1" height="1" fill="#e00000"/><rect x="14" y="8" width="1" height="1" fill="#000"/><rect x="0" y="9" width="1" height="1" fill="#000"/><rect x="1" y="9" width="1" height="1" fill="#e00000"/><rect x="2" y="9" width="4" height="1" fill="#fff"/><rect x="6" y="9" width="1" height="1" fill="#000"/><rect x="7" y="9" width="5" height="1" fill="#fff"/><rect x="12" y="9" width="1" height="1" fill="#000"/><rect x="13" y="9" width="1" height="1" fill="#e00000"/><rect x="14" y="9" width="1" height="1" fill="#000"/><rect x="0" y="10" width="1" height="1" fill="#000"/><rect x="1" y="10" width="1" height="1" fill="#e00000"/><rect x="2" y="10" width="1" height="1" fill="#000"/><rect x="3" y="10" width="3" height="1" fill="#fff"/><rect x="6" y="10" width="1" height="1" fill="#000"/><rect x="7" y="10" width="2" height="1" fill="#fff"/><rect x="9" y="10" width="1" height="1" fill="#ffff00"/><rect x="10" y="10" width="1" height="1" fill="#fff"/><rect x="11" y="10" width="1" height="1" fill="#ffff00"/><rect x="12" y="10" width="1" height="1" fill="#000"/><rect x="13" y="10" width="1" height="1" fill="#e00000"/><rect x="14" y="10" width="1" height="1" fill="#000"/><rect x="1" y="11" width="1" height="1" fill="#000"/><rect x="2" y="11" width="1" height="1" fill="#e00000"/><rect x="3" y="11" width="1" height="1" fill="#000"/><rect x="4" y="11" width="2" height="1" fill="#fff"/><rect x="6" y="11" width="1" height="1" fill="#000"/><rect x="7" y="11" width="4" height="1" fill="#fff"/><rect x="11" y="11" width="2" height="1" fill="#000"/><rect x="13" y="11" width="1" height="1" fill="#e00000"/><rect x="14" y="11" width="1" height="1" fill="#000"/><rect x="2" y="12" width="1" height="1" fill="#000"/><rect x="3" y="12" width="1" height="1" fill="#e00000"/><rect x="4" y="12" width="1" height="1" fill="#000"/><rect x="5" y="12" width="1" height="1" fill="#fff"/><rect x="6" y="12" width="5" height="1" fill="#000"/><rect x="11" y="12" width="3" height="1" fill="#e00000"/><rect x="14" y="12" width="1" height="1" fill="#000"/><rect x="2" y="13" width="1" height="1" fill="#000"/><rect x="3" y="13" width="2" height="1" fill="#e00000"/><rect x="5" y="13" width="1" height="1" fill="#000"/><rect x="6" y="13" width="8" height="1" fill="#e00000"/><rect x="14" y="13" width="1" height="1" fill="#000"/><rect x="3" y="14" width="1" height="1" fill="#000"/><rect x="4" y="14" width="2" height="1" fill="#e00000"/><rect x="6" y="14" width="9" height="1" fill="#000"/><rect x="4" y="15" width="2" height="1" fill="#000"/></svg></div><div style='position:absolute;left:21px;top:6px;font:400 12px/15px "Liberation Serif",serif;color:#800000;white-space:pre;letter-spacing:-0.1px'>J0200114</div></div>
<div style="position:absolute;left:635px;top:460px;width:417px;height:145px;box-sizing:border-box;background:#d4d0c8;border:1px solid;border-color:#d4d0c8 #404040 #404040 #d4d0c8;box-shadow:inset 1px 1px 0 #fff,inset -1px -1px 0 #808080">
<div style="position:absolute;left:2px;top:2px;width:411px;height:18px;background:linear-gradient(to right,#0a246a,#a6caf0)"></div>
<div style='position:absolute;left:4.3px;top:4.19px;font:700 11px/14px "Liberation Sans", sans-serif;color:#fff;white-space:pre;transform:scaleX(1.5805);transform-origin:0 0;'>***</div>
<div style='position:absolute;left:25.7px;top:4.19px;font:700 11px/14px "Liberation Sans", sans-serif;color:#fff;white-space:pre;transform:scaleX(1.1246);transform-origin:0 0;'>Податкова</div>
<div style='position:absolute;left:93.7px;top:4.19px;font:700 11px/14px "Liberation Sans", sans-serif;color:#fff;white-space:pre;transform:scaleX(1.104);transform-origin:0 0;'>звітність</div>
<div style='position:absolute;left:150.9px;top:4.19px;font:700 11px/14px "Liberation Sans", sans-serif;color:#fff;white-space:pre;transform:scaleX(1.0844);transform-origin:0 0;'>1.30.40</div>
<div style='position:absolute;left:194.7px;top:4.19px;font:700 11px/14px "Liberation Sans", sans-serif;color:#fff;white-space:pre;transform:scaleX(1.5727);transform-origin:0 0;'>***</div>
<div style='position:absolute;left:218.4px;top:4.19px;font:700 11px/14px "Liberation Sans", sans-serif;color:#fff;white-space:pre;transform:scaleX(1.2415);transform-origin:0 0;'>11111111</div>
<div style='position:absolute;left:277.4px;top:4.19px;font:700 11px/14px "Liberation Sans", sans-serif;color:#fff;white-space:pre;transform:scaleX(1.1078);transform-origin:0 0;'>Тестове</div>
<div style='position:absolute;left:328.5px;top:4.19px;font:700 11px/14px "Liberation Sans", sans-serif;color:#fff;white-space:pre;transform:scaleX(1.0332);transform-origin:0 0;'>підприєм...</div>
<div style="position:absolute;left:395px;top:4px;width:16px;height:14px;box-sizing:border-box;background:#d4d0c8;border:1px solid;border-color:#fff #404040 #404040 #fff;box-shadow:inset -1px -1px 0 #808080"><svg style="position:absolute;left:3px;top:2px" width="8" height="7" viewBox="0 0 8 7"><path d="M0 0h2l2 2 2-2h2L5 3.5 8 7H6L4 5 2 7H0l3-3.5z" fill="#000"/></svg></div>
<div style="position:absolute;left:2px;top:20px;width:411px;height:79px;background:#fff"></div>
<div style="position:absolute;left:23px;top:44px;width:32px;height:32px"><svg width="32" height="32" viewBox="0 0 32 32" style="display:block;overflow:visible"><defs><radialGradient id="qg" cx="35%" cy="25%" r="85%"><stop offset="0" stop-color="#4a78e8"/><stop offset=".55" stop-color="#1038a0"/><stop offset="1" stop-color="#2a55d8"/></radialGradient></defs><circle cx="16" cy="16" r="15.5" fill="#fff" stroke="#7a7a7a" stroke-width="1"/><circle cx="16" cy="16" r="13.6" fill="url(#qg)"/><text transform="translate(16.2 26.4) scale(0.8 1)" x="0" y="0" text-anchor="middle" font-family="Liberation Sans, sans-serif" font-size="27" font-weight="700" fill="#f4f4f4">?</text></svg></div>
<div style='position:absolute;left:64px;top:54px;font:400 11px/14px "Liberation Sans",sans-serif;color:#000;white-space:pre;letter-spacing:0.07px'>Заповнити заголовок документа?</div>
<div style='position:absolute;left:247px;top:109px;width:75px;height:23px;box-sizing:border-box;background:#d4d0c8;border:1px solid #000;box-shadow:inset 1px 1px 0 #fff,inset -1px -1px 0 #404040,inset -2px -2px 0 #808080;font:400 11px/21px "Liberation Sans",sans-serif;text-align:center;color:#000'>OK</div>
<div style='position:absolute;left:331px;top:109px;width:75px;height:23px;box-sizing:border-box;background:#d4d0c8;border:1px solid;border-color:#fff #404040 #404040 #fff;box-shadow:inset -1px -1px 0 #808080;font:400 11px/21px "Liberation Sans",sans-serif;text-align:center;color:#000'>Отмена</div>
</div>
</body></html>
